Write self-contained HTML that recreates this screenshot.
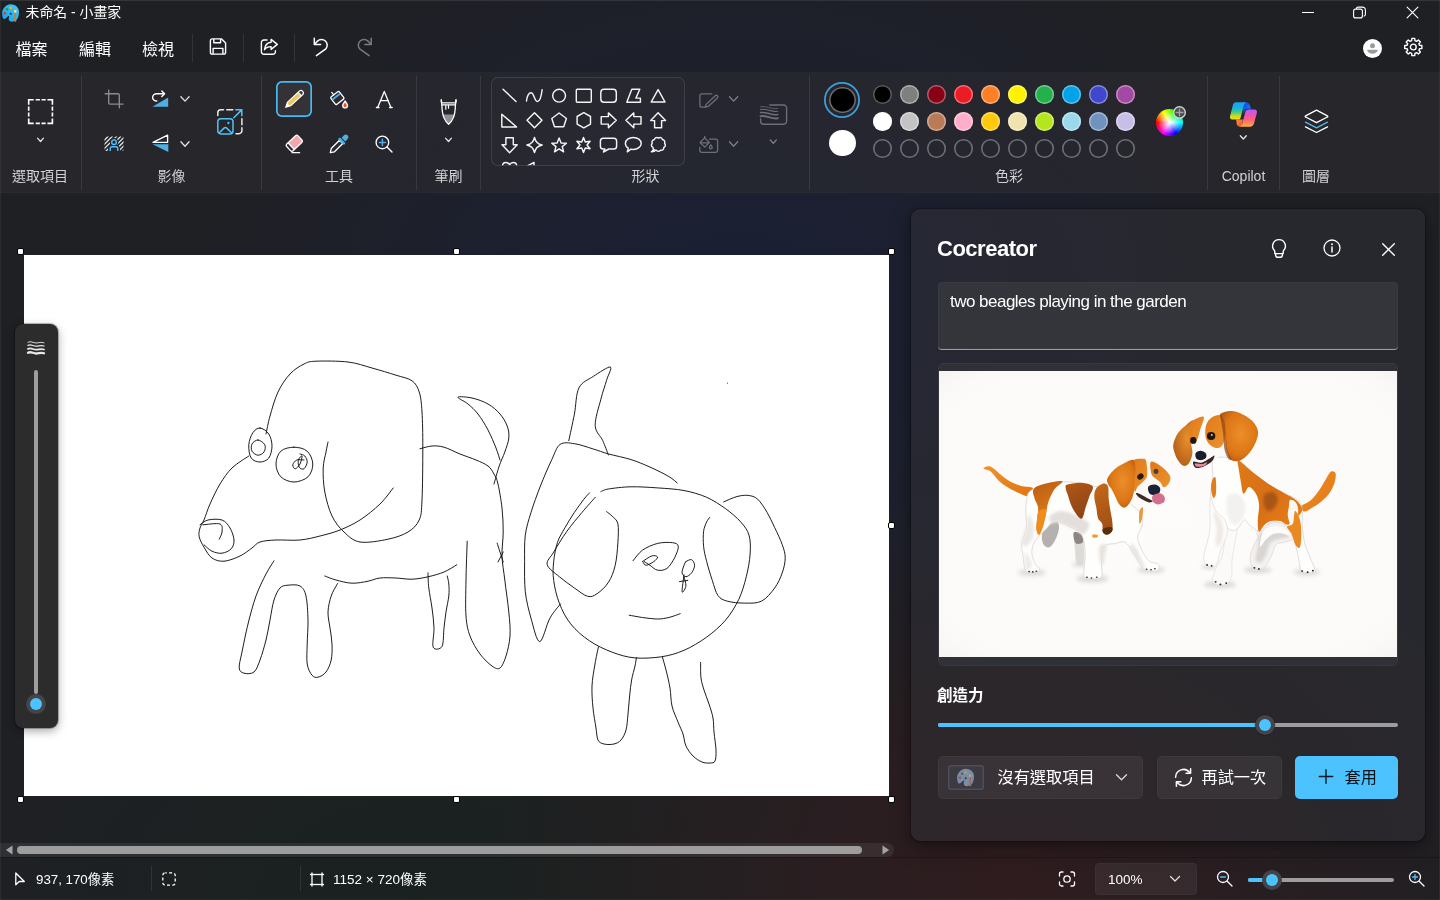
<!DOCTYPE html>
<html lang="zh-Hant">
<head>
<meta charset="utf-8">
<title>未命名 - 小畫家</title>
<style>
*{box-sizing:border-box;margin:0;padding:0}
html,body{width:1440px;height:900px;overflow:hidden;background:#1f2024}
body{font-family:"Liberation Sans","Noto Sans CJK TC",sans-serif;color:#fff;-webkit-font-smoothing:antialiased}
#app{position:relative;will-change:transform;width:1440px;height:900px;overflow:hidden;
 background:
  radial-gradient(ellipse 560px 420px at 740px 300px, rgba(26,31,54,.98), rgba(26,31,54,0) 100%),
  radial-gradient(ellipse 520px 400px at 1010px 890px, rgba(48,28,30,.95), rgba(48,28,30,0) 100%),
  radial-gradient(ellipse 480px 300px at 420px 900px, rgba(24,33,30,.8), rgba(24,33,30,0) 100%),
  #1f2024;}
.abs{position:absolute}
svg{position:absolute;overflow:visible}
.t{position:absolute;white-space:nowrap;line-height:1}
.ribbon{position:absolute;left:0;top:72px;width:1440px;height:121px;background:rgba(43,44,48,.6);box-shadow:inset 0 -1px 0 rgba(255,255,255,.02)}
.lbl{position:absolute;top:167.500px;font-size:14px;color:#d2d2d4;white-space:nowrap;line-height:16px;transform:translateX(-50%)}
.vsep{position:absolute;width:1px;background:rgba(255,255,255,.09)}
.sw{position:absolute;width:18.600px;height:18.600px;border-radius:50%;box-shadow:inset 0 0 0 1.500px rgba(255,255,255,.36)}
.sw.e{box-shadow:inset 0 0 0 1.600px #6d6f77;background:transparent}
.hd{position:absolute;width:7px;height:7px;background:#fff;border:1.5px solid #000;border-radius:2px}
</style>
</head>
<body>
<div id="app">

<!-- TITLE BAR -->
<div class="t" style="left:25.500px;top:4px;font-size:13.900px;line-height:16px;color:#fff">未命名 - 小畫家</div>

<!-- MENU BAR -->
<div class="t" style="left:15.500px;top:40.500px;font-size:16px;line-height:18px">檔案</div>
<div class="t" style="left:79px;top:40.500px;font-size:16px;line-height:18px">編輯</div>
<div class="t" style="left:142px;top:40.500px;font-size:16px;line-height:18px">檢視</div>
<div class="vsep" style="left:192px;top:34px;height:28px"></div>
<div class="vsep" style="left:243px;top:34px;height:28px"></div>
<div class="vsep" style="left:294px;top:34px;height:28px"></div>

<!--TOP-START-->
<!-- paint app icon -->
<svg style="left:2px;top:4px" width="18" height="18" viewBox="0 0 18 18"><defs><linearGradient id="pal" x1="0" y1="1" x2="1" y2="0"><stop offset="0" stop-color="#169ff0"/><stop offset="1" stop-color="#3ccbfb"/></linearGradient></defs><path d="M.1 9.300C.1 6.800 1 5 2.200 3.800 3.800 1.600 6 .2 8.600 .2c2.200 0 4.100.7 5.500 1.900 1.800 1.400 2.900 3.300 2.900 5.600 0 1.800-.2 3.500-.7 5-.6 1.700-1.500 3.100-2.700 3.900-1.100.8-2.500 1.100-3.900 1.100-1.300 0-2.300-.7-2.800-1.700-.5-1.100 0-2.100.3-3.300.2-.7-.7-.9-1.400-.3l-2.800 2.500c-.8.500-1.700.1-2.200-1.100C.3 12.500.1 10.900.1 9.300z" fill="url(#pal)"/><circle cx="2.900" cy="9.200" r="1.250" fill="#f2350e"/><circle cx="5.100" cy="5.200" r="1.250" fill="#2f9e16"/><circle cx="8.800" cy="3.800" r="1.350" fill="#fdb500"/><circle cx="8.700" cy="9.750" r="1" fill="#22353c"/><path d="M11.800 6h2.900l-.6 2.900h-1.700z" fill="#ffd59a"/><path d="M12.400 8.800h1.700l.1 9h-1.900z" fill="#e07a08"/></svg>
<!-- window controls -->
<svg style="left:1301px;top:11px" width="14" height="3" viewBox="0 0 14 3"><path d="M1 1.500h12" stroke="#fff" stroke-width="1"/></svg>
<svg style="left:1353px;top:6px" width="13" height="12" viewBox="0 -0.5 13 12" fill="none" stroke="#fff" stroke-width="1.100"><rect x=".6" y="2.600" width="8.800" height="8.800" rx="2"/><path d="M3.200 2.400c.2-1 1-1.800 2.100-1.800h4.200a2.900 2.900 0 0 1 2.900 2.900v4.200c0 1-.7 1.800-1.700 2"/></svg>
<svg style="left:1406px;top:6px" width="12" height="12" viewBox="-0.5 -0.5 12 12" fill="none" stroke="#fff" stroke-width="1.100" stroke-linecap="round"><path d="M.6.600l10.800 10.800M11.400.6L.6 11.400"/></svg>
<!-- save -->
<svg style="left:209px;top:38px" width="17" height="17" viewBox="-0.5 0 17 17" fill="none" stroke="#fff" stroke-width="1.400" stroke-linejoin="round"><path d="M2.800.9h9.300l4 4v9.300a1.900 1.900 0 0 1-1.900 1.900H2.800A1.900 1.900 0 0 1 .9 14.200V2.800A1.900 1.900 0 0 1 2.800.9z"/><path d="M4.300 1v3.800h6.800V1"/><path d="M3.600 16v-5.600h9.800V16"/></svg>
<!-- share -->
<svg style="left:260px;top:38px" width="18" height="17" viewBox="-0.5 -0.5 18 17" fill="none" stroke="#fff" stroke-width="1.400" stroke-linejoin="round" stroke-linecap="round"><path d="M6.500 1.500H3.400A2.500 2.500 0 0 0 .9 4v9.200a2.500 2.500 0 0 0 2.500 2.500h9a2.500 2.500 0 0 0 2.500-2.500v-.9"/><path d="M10.600.9l6.200 5-6.200 5V8.100c-3 0-5 .8-6.600 3.100.4-4 2.600-7 6.600-7.400z"/></svg>
<!-- undo -->
<svg style="left:312px;top:37px" width="17" height="20" viewBox="0 0 17 20" fill="none" stroke="#fff" stroke-width="1.500" stroke-linejoin="round" stroke-linecap="round"><path d="M2.300 1.200v6.300h6.300"/><path d="M2.600 7.300l2.900-3.200a5.700 5.700 0 0 1 8.300 7.800L4.400 18.600"/></svg>
<!-- redo -->
<svg style="left:356px;top:37px" width="17" height="20" viewBox="-0.5 0 17 20" fill="none" stroke="#7a7b80" stroke-width="1.500" stroke-linejoin="round" stroke-linecap="round"><path d="M14.700 1.200v6.300H8.400"/><path d="M14.400 7.300l-2.900-3.200a5.700 5.700 0 0 0-8.300 7.800l9.400 6.700"/></svg>
<!-- avatar -->
<div class="abs" style="left:1363px;top:38.500px;width:19px;height:19px;border-radius:50%;background:#fff"></div>
<svg style="left:1363px;top:38px" width="19" height="19" viewBox="0 -0.5 19 19"><circle cx="9.500" cy="7.300" r="2.500" fill="#9b9b9b"/><path d="M5 11.200h9c.5 0 .8.400.7.900-.4 1.900-2.500 3.200-5.200 3.200s-4.800-1.300-5.200-3.200c-.1-.5.200-.9.700-.9z" fill="#9b9b9b"/></svg>
<!-- gear -->
<svg style="left:1403px;top:37px" width="20" height="20" viewBox="-0.3 0 20 20" fill="none" stroke="#fff" stroke-width="1.400" stroke-linejoin="round"><path d="M8.37 3.71L8.56 1.42L11.44 1.42L11.63 3.71L13.3 4.4L15.05 2.92L17.08 4.95L15.6 6.7L16.29 8.37L18.58 8.56L18.58 11.44L16.29 11.63L15.6 13.3L17.08 15.05L15.05 17.08L13.3 15.6L11.63 16.29L11.44 18.58L8.56 18.58L8.37 16.29L6.7 15.6L4.95 17.08L2.92 15.05L4.4 13.3L3.71 11.63L1.42 11.44L1.42 8.56L3.71 8.37L4.4 6.7L2.92 4.95L4.95 2.92L6.7 4.4z"/><circle cx="10" cy="10" r="2.900"/></svg>
<!--TOP-END-->
<!-- RIBBON -->
<div class="ribbon"></div>
<div class="vsep" style="left:81px;top:76px;height:114px"></div>
<div class="vsep" style="left:261px;top:76px;height:114px"></div>
<div class="vsep" style="left:416px;top:76px;height:114px"></div>
<div class="vsep" style="left:480px;top:76px;height:114px"></div>
<div class="vsep" style="left:809px;top:76px;height:114px"></div>
<div class="vsep" style="left:1207px;top:76px;height:114px"></div>
<div class="vsep" style="left:1279px;top:76px;height:114px"></div>
<div class="lbl" style="left:40px">選取項目</div>
<div class="lbl" style="left:171.5px">影像</div>
<div class="lbl" style="left:339px">工具</div>
<div class="lbl" style="left:448.5px">筆刷</div>
<div class="lbl" style="left:645.5px">形狀</div>
<div class="lbl" style="left:1009px">色彩</div>
<div class="lbl" style="left:1243.5px">Copilot</div>
<div class="lbl" style="left:1316px">圖層</div>
<!--RI-START-->
<svg style="left:27px;top:98px" width="27" height="27" viewBox="0 0 27 27" fill="none" stroke="#fff" stroke-width="1.650"><path d="M1.700 6.700V1.700h5M8.700 1.700h4.200M14.500 1.700h4.200M20.400 1.700h5v5M25.400 8.600v4.200M25.400 14.400v4.200M25.400 20.400v5h-5M18.700 25.400h-4.200M12.900 25.400H8.700M6.700 25.400h-5v-5M1.700 18.600v-4.200M1.700 12.800V8.600"/></svg>
<svg style="left:36px;top:137px" width="8" height="5.3" viewBox="-0.5 -0.15 8 5.3" fill="none" stroke="#e4e4e6" stroke-width="1.3" stroke-linecap="round" stroke-linejoin="round"><path d="M1 1l3 3.3 3 -3.3"/></svg>
<svg style="left:104px;top:89px" width="20" height="20" viewBox="0 0 20 20" fill="none" stroke="#8b8c91" stroke-width="1.35" stroke-linecap="round" stroke-linejoin="round"><path d="M4.700 1.200v12.600a1.300 1.300 0 0 0 1.300 1.300h13"/><path d="M1.200 4.700h12.800a1.300 1.300 0 0 1 1.300 1.300v12.800"/></svg>
<svg style="left:151px;top:90px" width="19" height="18" viewBox="0 0 19 18"><path d="M1.400 16.700h15.800V7.600z" fill="#4cb0e4"/><path d="M5.800 11c-2.300 0-4.200-1.600-4.200-3.600s1.900-3.600 4.200-3.600h7.400" fill="none" stroke="#fff" stroke-width="1.4" stroke-linecap="round"/><path d="M10.800 1.100l2.800 2.700-2.800 2.700" fill="none" stroke="#fff" stroke-width="1.4" stroke-linecap="round" stroke-linejoin="round"/></svg>
<svg style="left:179px;top:95px" width="10.2" height="6.4" viewBox="-0.9 -0.7 10.2 6.4" fill="none" stroke="#e4e4e6" stroke-width="1.3" stroke-linecap="round" stroke-linejoin="round"><path d="M1 1l4.1 4.4 4.1 -4.4"/></svg>
<svg style="left:104px;top:136px" width="19" height="15" viewBox="-0.5 -0.5 19 15"><defs><clipPath id="rbc"><rect x="0" y="0" width="19" height="14.500" rx="1"/></clipPath></defs><g clip-path="url(#rbc)" stroke="#e8e8e8" stroke-width="1.25"><path d="M-3 6.500l7-7M-3 10.700l11.200-11.200M-3 14.900l15.400-15.400M-1 17.100l17.600-17.600M3.200 17.100l17.600-17.600M7.400 17.100l14-14M11.600 17.100l10-10M15.800 17.100l6-6"/></g><circle cx="9.500" cy="5.700" r="4.300" fill="#27282d"/><path d="M3.500 15V12a3.600 3.600 0 0 1 3.600-3.600h4.800a3.600 3.600 0 0 1 3.600 3.600V15z" fill="#27282d"/><circle cx="9.500" cy="5.700" r="2.300" fill="none" stroke="#4cc2ff" stroke-width="1.4"/><path d="M5.700 14.500v-2.300a1.900 1.900 0 0 1 1.900-1.900h3.800a1.900 1.900 0 0 1 1.900 1.900v2.300" fill="none" stroke="#4cc2ff" stroke-width="1.4"/></svg>
<svg style="left:151px;top:134px" width="18" height="19" viewBox="-0.5 0 18 19"><path d="M1.500 8.400L16.100 1.200v7.200z" fill="none" stroke="#fff" stroke-width="1.35" stroke-linejoin="round"/><path d="M1 10.300h15.800v7.600z" fill="#4cb0e4"/></svg>
<svg style="left:179px;top:140px" width="10.2" height="6.4" viewBox="-0.9 -0.8 10.2 6.4" fill="none" stroke="#e4e4e6" stroke-width="1.3" stroke-linecap="round" stroke-linejoin="round"><path d="M1 1l4.1 4.4 4.1 -4.4"/></svg>
<svg style="left:216px;top:108px" width="28" height="28" viewBox="0 0 28 28" fill="none" stroke-width="1.5" stroke-linecap="round" stroke-linejoin="round"><path d="M1.800 7.500V4.800a3 3 0 0 1 3-3h2.700M10.800 1.800h6" stroke="#e9e9ea"/><path d="M25.900 10.800v6M25.900 19.800v2.900a3 3 0 0 1-3 3h-2.900" stroke="#e9e9ea"/><path d="M17.800 9.800L25.700 1.900M19.800 1.800h6v6" stroke="#4fc3f7"/><rect x="1.800" y="10.700" width="15.200" height="15.200" rx="3" stroke="#4fc3f7"/><circle cx="12.400" cy="15" r="1.150" fill="#4fc3f7" stroke="none"/><path d="M3.300 24.800l4.700-4.700a1.900 1.900 0 0 1 2.700 0l4.800 4.700" stroke="#4fc3f7"/></svg>
<div class="abs" style="left:276px;top:80.700px;width:36px;height:36.300px;border-radius:6px;background:#343236;box-shadow:inset 0 0 0 1.700px #45baf6"></div>
<svg style="left:282px;top:87px" width="24" height="24" viewBox="0 0 24 24"><g transform="translate(12.100 12.300) rotate(-43)"><path d="M-12.600 0l5.600-3h16.300a3 3 0 0 1 0 6H-7z" fill="#fff"/><path d="M-6.800-1.900H7.300v3.800H-6.800l-1.200-1.900z" fill="#ecc763"/><path d="M8.400-1.900h.9a1.900 1.900 0 0 1 0 3.800h-.9z" fill="#3a393d"/><path d="M-11.300 0l2.400-1.250v2.500z" fill="#3a393d" opacity=".0"/></g></svg>
<svg style="left:328px;top:88px" width="22" height="22" viewBox="0 0 22 22"><g transform="translate(9.200 9.800) rotate(-38)"><rect x="-5.400" y="-4.400" width="10.800" height="9.300" rx="1.300" fill="#2a2b30" stroke="#fff" stroke-width="1.300"/><path d="M-4.700-1.500h9.400" stroke="#49a9e0" stroke-width="2"/><path d="M-4.700 .4h9.400" stroke="#fff" stroke-width=".7" opacity=".0"/><path d="M-1-4.400v-3.200" stroke="#fff" stroke-width="1.200" stroke-linecap="round"/></g><path d="M17.100 11.900c2 2.500 3.100 4.100 3.100 5.500a3.100 3.100 0 0 1-6.200 0c0-1.400 1.100-3 3.100-5.500z" fill="#fff"/><path d="M17.100 14.400c1.100 1.400 1.700 2.300 1.700 3.100a1.700 1.700 0 0 1-3.400 0c0-.8.600-1.700 1.700-3.100z" fill="#f4511e"/></svg>
<svg style="left:375px;top:90px" width="19" height="19" viewBox="0 0 19 19" fill="none" stroke="#fff" stroke-width="1.300" stroke-linecap="round" stroke-linejoin="round"><path d="M2.700 17.400L9.300 1.400l6.600 16"/><path d="M5.400 10.700h7.800"/><path d="M1.400 17.500h2.600M14.600 17.500h2.600"/></svg>
<svg style="left:283px;top:133px" width="22" height="22" viewBox="0 0 22 22"><g transform="translate(11 10.500) rotate(-43)"><rect x="-7.400" y="-4.600" width="15.600" height="9.200" rx="1.800" fill="#f4a6ad"/><path d="M-7.400-2.800a1.800 1.800 0 0 1 1.800-1.800h1.700v9.200h-1.700a1.800 1.800 0 0 1-1.800-1.800z" fill="#2a2b30"/><rect x="-7.400" y="-4.600" width="15.600" height="9.200" rx="1.800" fill="none" stroke="#fff" stroke-width="1.300"/><path d="M-3.900-4.600v9.200" stroke="#fff" stroke-width="1.300"/></g><path d="M9 19.700h7.600" stroke="#fff" stroke-width="1.300" stroke-linecap="round"/></svg>
<svg style="left:328px;top:133px" width="22" height="22" viewBox="0 0 22 22"><g transform="translate(11 11) rotate(-45)"><path d="M-12.300 0l3.600-2.300H3v4.600H-8.700z" fill="#2a2b30" stroke="#fff" stroke-width="1.300" stroke-linejoin="round"/><rect x="2.600" y="-4.300" width="2.700" height="8.600" rx="1.200" fill="#4cb0e4"/><path d="M6.300-2.600h3.300a2.600 2.600 0 0 1 0 5.200H6.300z" fill="#4cb0e4"/></g></svg>
<svg style="left:374px;top:134px" width="20" height="20" viewBox="0 0 20 20" fill="none" stroke-linecap="round"><circle cx="8.400" cy="8.400" r="6.300" stroke="#fff" stroke-width="1.350"/><path d="M13 13l5 5" stroke="#fff" stroke-width="1.350"/><path d="M5.300 8.400h6.200M8.400 5.300v6.200" stroke="#4cb0e4" stroke-width="1.500"/></svg>
<svg style="left:440px;top:98px" width="18" height="26.6" viewBox="0 -0.947 18 28" preserveAspectRatio="none" fill="none" stroke="#fff" stroke-width="1.300" stroke-linejoin="round" stroke-linecap="round"><path d="M3 16.300H14.300C13.900 18 13.500 19.400 13.100 20.300 12 23 10.500 25 8.650 26.500 6.800 25 5.300 23 4.200 20.300 3.800 19.400 3.400 18 3 16.300z" fill="#8f9094" stroke="none"/><path d="M1.300 1c0 1.800.2 2.600.5 3.300H15.500c.3-.7.500-1.500.500-3.300"/><path d="M1.900 6.300H15.400"/><path d="M1.300 1C1.300 4 1.800 5 1.900 7 2 12 2.400 16 4 20 5.200 23 6.800 25 8.650 26.700 10.500 25 12.100 23 13.300 20 14.900 16 15.300 12 15.400 7 15.500 5 16 4 16 1"/><path d="M5.800 6.700v4.300M8.500 6.700v3.100" stroke-width="1.200"/></svg>
<svg style="left:444px;top:137px" width="8" height="5.3" viewBox="-0.5 -0.15 8 5.3" fill="none" stroke="#e4e4e6" stroke-width="1.3" stroke-linecap="round" stroke-linejoin="round"><path d="M1 1l3 3.3 3 -3.3"/></svg>
<div class="abs" style="left:490.500px;top:77px;width:194px;height:89px;border-radius:7px;border:1px solid rgba(255,255,255,.11);background:rgba(255,255,255,.012)"></div>
<svg style="left:0;top:0" width="1440" height="200" viewBox="0 0 1440 200" fill="none" stroke="#f4f4f5" stroke-width="1.450" stroke-linejoin="round" stroke-linecap="round"><defs><clipPath id="shc"><rect x="491" y="78" width="193" height="87.200"/></clipPath></defs><g clip-path="url(#shc)"><path d="M503 89.200L516 101.500"/><path d="M526.500 101c.6-4.800 2.400-8.200 4.600-8.200 3 0 3.400 8.700 6.400 8.700 2.300 0 3.900-5.500 4.600-11.800"/><circle cx="559.100" cy="95.700" r="6.400"/><rect x="576.300" y="89.300" width="15" height="13" rx="1"/><rect x="600.800" y="89.300" width="15.500" height="13" rx="3.200"/><path d="M631.8 89.3 L639.8 89.3 L635.9 98.1 L640.4 98.1 L640.4 102.2 L626.8 102.2z"/><path d="M658.1 89.6 L665 102 L651.2 102z"/><path d="M501.8 114.2 L501.8 127 L516.6 127z"/><path d="M534.5 112.8 L542 120.3 L534.5 127.8 L527 120.3z"/><path d="M559.1 113 L566.4 118.5 L563.7 126.7 L554.5 126.7 L551.8 118.5z"/><path d="M583.8 112.7 L590.5 116.5 L590.5 124.1 L583.8 127.9 L577.1 124.1 L577.1 116.5z"/><path d="M601.2 116.6 L608.4 116.6 L608.4 112.9 L616.3 120.3 L608.4 127.7 L608.4 124.1 L601.2 124.1z"/><path d="M641 116.6 L633.8 116.6 L633.8 112.9 L625.9 120.3 L633.8 127.7 L633.8 124.1 L641 124.1z"/><path d="M654.6 127.7 L654.6 120.6 L650.7 120.6 L658.1 112.7 L665.5 120.6 L661.6 120.6 L661.6 127.7z"/><path d="M505.9 137.7 L513.3 137.7 L513.3 144.8 L517.2 144.8 L509.6 152.7 L502 144.8 L505.9 144.8z"/><path d="M534.5 137.4Q535.8 143.7 542.1 145Q535.8 146.3 534.5 152.6Q533.2 146.3 526.9 145Q533.2 143.7 534.5 137.4z"/><path d="M559.1 137.9 L561.04 142.93 L566.42 143.22 L562.24 146.62 L563.63 151.83 L559.1 148.9 L554.57 151.83 L555.96 146.62 L551.78 143.22 L557.16 142.93z"/><path d="M583.5 137.4 L585.25 141.97 L590.08 141.2 L587 145 L590.08 148.8 L585.25 148.03 L583.5 152.6 L581.75 148.03 L576.92 148.8 L580 145 L576.92 141.2 L581.75 141.97z"/><path d="M603.200 138.200h10.600a2.800 2.800 0 0 1 2.800 2.800v5.200a2.800 2.800 0 0 1-2.800 2.800h-5l-5.400 3 1.500-3h-1.700a2.800 2.800 0 0 1-2.800-2.800V141a2.800 2.800 0 0 1 2.800-2.800z"/><path d="M633.300 137.400c4.400 0 7.900 2.700 7.900 6s-3.500 6-7.900 6c-.8 0-1.600-.1-2.300-.3l-3.700 2.700 1-3.700c-1.800-1.100-2.900-2.800-2.900-4.700 0-3.300 3.500-6 7.900-6z"/><path d="M658.4 138Q661.2 136.59 662.45 139.47Q665.5 140.2 664.6 143.21Q666.48 145.72 663.86 147.45Q663.67 150.58 660.55 150.22Q658.4 152.5 656.25 150.22Q653.13 150.58 652.94 147.45Q650.32 145.72 652.2 143.21Q651.3 140.2 654.35 139.47Q655.6 136.59 658.4 138z"/><path d="M653.800 149.600l-2.400 2.200 3.300-.6"/><path d="M502.500 166c0-2 1.500-3.600 3.500-3.600 1.500 0 2.800.9 3.600 2.200.8-1.300 2.100-2.200 3.600-2.200 2 0 3.500 1.600 3.500 3.600"/><path d="M527.500 166l6.500-3.600v3.600"/></g></svg>
<svg style="left:699px;top:93px" width="20" height="16" viewBox="0 0 20 16" fill="none" stroke="#6c6f77" stroke-width="1.300" stroke-linecap="round" stroke-linejoin="round"><path d="M12.800 .9H2.800A1.900 1.900 0 0 0 .9 2.800v9.400a1.900 1.900 0 0 0 1.900 1.900h3.600"/><path d="M6.200 14.200l1-2.800 9-8.600a1.550 1.550 0 0 1 2.200 2.200l-9.200 8.400z"/></svg>
<svg style="left:728px;top:95px" width="10.2" height="6.4" viewBox="-0.5 -0.7 10.2 6.4" fill="none" stroke="#7e8188" stroke-width="1.3" stroke-linecap="round" stroke-linejoin="round"><path d="M1 1l4.1 4.4 4.1 -4.4"/></svg>
<svg style="left:699px;top:135px" width="20" height="18" viewBox="0 -0.5 20 18" fill="none" stroke="#6c6f77" stroke-width="1.300" stroke-linecap="round" stroke-linejoin="round"><path d="M10.500 3.600h6.300a1.800 1.800 0 0 1 1.800 1.800v9.700a1.800 1.800 0 0 1-1.800 1.800H2.600A1.800 1.800 0 0 1 .8 15.100v-3.300"/><path d="M5.700 2.400l4.600 4.600-4.600 4.600L1.100 7z"/><path d="M5.700 2.600V.8M2 7.300h7.400"/><path d="M11.800 9.400c.9 1.200 1.400 2 1.400 2.600a1.400 1.400 0 0 1-2.800 0c0-.6.500-1.400 1.400-2.600z"/></svg>
<svg style="left:728px;top:140px" width="10.2" height="6.4" viewBox="-0.5 -0.8 10.2 6.4" fill="none" stroke="#7e8188" stroke-width="1.3" stroke-linecap="round" stroke-linejoin="round"><path d="M1 1l4.1 4.4 4.1 -4.4"/></svg>
<svg style="left:759px;top:103px" width="29" height="22" viewBox="0 -0.5 29 22" fill="none" stroke="#6c6f77" stroke-linecap="round"><path d="M10.800 1.500h13.800a3 3 0 0 1 3 3v13.200a3 3 0 0 1-3 3H4.600a3 3 0 0 1-3-3v-2.300" stroke-width="1.350"/><path d="M1.600 3.300c5.500-1.400 10.500 2.800 17.200 1.700" stroke-width=".8"/><path d="M1.600 6c5.500-1.400 10.500 2.900 17.200 1.800" stroke-width="1.100"/><path d="M1.600 9.100c5.500-1.400 10.500 3 17.200 1.900" stroke-width="1.500"/><path d="M1.600 12.700c5.500-1.400 10.500 3.200 17.200 2.100" stroke-width="2"/></svg>
<svg style="left:769px;top:139px" width="8" height="5.3" viewBox="-0.3 -0.05 8 5.3" fill="none" stroke="#7e8188" stroke-width="1.3" stroke-linecap="round" stroke-linejoin="round"><path d="M1 1l3 3.3 3 -3.3"/></svg>
<div class="abs" style="left:824.300px;top:82px;width:36px;height:36px;border-radius:50%;box-shadow:inset 0 0 0 1.800px #3c9fd8"></div>
<div class="abs" style="left:829px;top:86.700px;width:26.600px;height:26.600px;border-radius:50%;background:#000;box-shadow:inset 0 0 0 1.600px #6b6c71"></div>
<div class="abs" style="left:829px;top:129.700px;width:26.600px;height:26.600px;border-radius:50%;background:#fff"></div>
<div class="sw" style="left:873.2px;top:85.300px;background:#000000"></div>
<div class="sw" style="left:873.2px;top:112.400px;background:#ffffff"></div>
<div class="sw e" style="left:873.2px;top:139.400px"></div>
<div class="sw" style="left:900.22px;top:85.300px;background:#7f7f7f"></div>
<div class="sw" style="left:900.22px;top:112.400px;background:#c3c3c3"></div>
<div class="sw e" style="left:900.22px;top:139.400px"></div>
<div class="sw" style="left:927.24px;top:85.300px;background:#880015"></div>
<div class="sw" style="left:927.24px;top:112.400px;background:#b97a57"></div>
<div class="sw e" style="left:927.24px;top:139.400px"></div>
<div class="sw" style="left:954.26px;top:85.300px;background:#ed1c24"></div>
<div class="sw" style="left:954.26px;top:112.400px;background:#ffaec9"></div>
<div class="sw e" style="left:954.26px;top:139.400px"></div>
<div class="sw" style="left:981.28px;top:85.300px;background:#ff7f27"></div>
<div class="sw" style="left:981.28px;top:112.400px;background:#ffc90e"></div>
<div class="sw e" style="left:981.28px;top:139.400px"></div>
<div class="sw" style="left:1008.3px;top:85.300px;background:#fff200"></div>
<div class="sw" style="left:1008.3px;top:112.400px;background:#efe4b0"></div>
<div class="sw e" style="left:1008.3px;top:139.400px"></div>
<div class="sw" style="left:1035.32px;top:85.300px;background:#22b14c"></div>
<div class="sw" style="left:1035.32px;top:112.400px;background:#b5e61d"></div>
<div class="sw e" style="left:1035.32px;top:139.400px"></div>
<div class="sw" style="left:1062.34px;top:85.300px;background:#00a2e8"></div>
<div class="sw" style="left:1062.34px;top:112.400px;background:#99d9ea"></div>
<div class="sw e" style="left:1062.34px;top:139.400px"></div>
<div class="sw" style="left:1089.36px;top:85.300px;background:#3f48cc"></div>
<div class="sw" style="left:1089.36px;top:112.400px;background:#7092be"></div>
<div class="sw e" style="left:1089.36px;top:139.400px"></div>
<div class="sw" style="left:1116.38px;top:85.300px;background:#a349a4"></div>
<div class="sw" style="left:1116.38px;top:112.400px;background:#c8bfe7"></div>
<div class="sw e" style="left:1116.38px;top:139.400px"></div>
<div class="abs" style="left:1156px;top:109px;width:27px;height:27px;border-radius:50%;background:radial-gradient(circle,#fff 0%,rgba(255,255,255,.85) 12%,rgba(255,255,255,0) 62%),conic-gradient(from 270deg,#ff0000,#ffff00 16.600%,#00ff00 33.300%,#00ffff 50%,#0000ff 66.600%,#ff00ff 83.300%,#ff0000)"></div>
<svg style="left:1172px;top:105px" width="14" height="14" viewBox="-0.5 -0.5 14 14"><circle cx="7" cy="7" r="5.800" fill="#4c4d50" stroke="#d2d2d4" stroke-width="1.400"/><path d="M7 3.600v6.800M3.600 7h6.800" stroke="#9fa0a2" stroke-width="1.300" stroke-linecap="round"/></svg>
<svg style="left:1229px;top:101px" width="29" height="27" viewBox="0 0 29 27"><defs>
<linearGradient id="cpa" x1="0" y1="0" x2="0" y2="1"><stop offset="0" stop-color="#1e9bff"/><stop offset=".3" stop-color="#12b2e6"/><stop offset=".55" stop-color="#3ec98c"/><stop offset=".8" stop-color="#c8dc1e"/><stop offset="1" stop-color="#ffdc00"/></linearGradient>
<linearGradient id="cpb" x1="0" y1="0" x2="0" y2="1"><stop offset="0" stop-color="#b45cff"/><stop offset=".3" stop-color="#ea52b8"/><stop offset=".6" stop-color="#ff6478"/><stop offset="1" stop-color="#ffae3c"/></linearGradient>
<linearGradient id="cpc" x1="0" y1="0" x2="1" y2="1"><stop offset="0" stop-color="#0d3fe0"/><stop offset="1" stop-color="#2a8cf5"/></linearGradient>
<linearGradient id="cpd" x1="0" y1="0" x2="1" y2="1"><stop offset="0" stop-color="#ff8a3a"/><stop offset="1" stop-color="#f0502e"/></linearGradient></defs>
<path d="M14.300 1.200h2.600c1.800 0 3.100.9 3.700 2.500l1.500 4.100h-3.700c-1.200 0-2.200.7-2.600 1.800l-1.500 4z" fill="url(#cpc)"/>
<path d="M7.200 18.600h6.800l-1.400 5.300c-.3 1-.8 1.700-1.500 1.900-1.800 0-2.900-1-3.400-2.700z" fill="url(#cpd)"/>
<path d="M7 1.200h9.900c-1 .8-1.700 2-2.200 3.600l-2.900 11.100c-.5 1.800-1.200 2.700-2 2.700H3.200C1.500 18.600.5 17 1 15.300L4 3.800C4.400 2.200 5.500 1.200 7 1.200z" fill="url(#cpa)"/>
<path d="M19.100 8.600h6.500c1.700 0 2.800 1.500 2.300 3.200l-2.900 10.600c-.5 1.800-2.100 3.400-3.900 3.400H11.100c1-.8 1.700-2 2.200-3.600l2.900-10.800c.4-1.600 1.500-2.800 2.900-2.800z" fill="url(#cpb)"/>
</svg>
<svg style="left:1239px;top:134px" width="8" height="5.3" viewBox="-0.3 -0.75 8 5.3" fill="none" stroke="#e4e4e6" stroke-width="1.3" stroke-linecap="round" stroke-linejoin="round"><path d="M1 1l3 3.3 3 -3.3"/></svg>
<svg style="left:1304px;top:109px" width="25" height="25" viewBox="0 0 25 25" fill="none" stroke-width="1.400" stroke-linejoin="round" stroke-linecap="round"><path d="M12.500 1.200l10.900 5.700a.6.600 0 0 1 0 1.100L12.500 13.700 1.600 8a.6.600 0 0 1 0-1.100z" stroke="#fff"/><path d="M1.500 13.200l11 5.600 11-5.600" stroke="#4cb8ea"/><path d="M1.500 17.900l11 5.600 11-5.600" stroke="#fff"/></svg>
<!--RI-END-->

<!-- WORKSPACE / CANVAS -->
<div class="abs" id="canvas" style="left:24px;top:255px;width:865px;height:541px;background:#fff"></div>
<!--SK-START-->
<svg style="left:0;top:0" width="1440" height="900" viewBox="0 0 1440 900" fill="none" stroke="#111" stroke-width="0.950" stroke-linecap="round" stroke-linejoin="round"><path d="M266 434C266.7 431 268 423 270 416C272 409 274.7 399 278 392C281.3 385 285.7 378.7 290 374C294.3 369.3 299.7 366.1 304 364C308.3 361.9 308.7 361.5 316 361.2C323.3 360.9 338.7 360.9 348 362C357.3 363.1 364 365.8 372 368C380 370.2 389.3 373.1 396 375.2C402.7 377.3 408.1 378 412 380.8C415.9 383.6 417.5 386.8 419.2 392C420.9 397.2 421.4 402.7 422 412C422.6 421.3 422.8 433.3 422.8 448C422.8 462.7 422.6 488 422 500C421.4 512 421.5 514.7 419.2 520C416.9 525.3 413.2 528.8 408 532C402.8 535.2 396 537.5 388 539.2C380 540.9 367.3 543.2 360 542C352.7 540.8 348.7 536.3 344 532C339.3 527.7 335.2 522.7 332 516C328.8 509.3 326.3 500 324.8 492C323.3 484 323 474.7 323.2 468C323.4 461.3 325.2 456.3 326 452C326.8 447.7 327.7 443.7 328 442"/><path d="M248.8 456C246 458 236.8 463.3 232 468C227.2 472.7 223.7 478 220 484C216.3 490 212.7 498 210 504C207.3 510 205.7 516 204 520C202.3 524 200.8 525.2 200 528C199.2 530.8 198.5 533.6 199.2 536.8C199.9 540 201.9 543.7 204 547.2C206.1 550.7 208.7 555.7 212 558C215.3 560.3 219.3 561.5 224 561.2C228.7 560.9 235.3 558.2 240 556C244.7 553.8 248.7 550.3 252 548C255.3 545.7 256 543.3 260 542C264 540.7 269.3 540.3 276 540C282.7 539.7 292.7 540.7 300 540C307.3 539.3 313.3 537.7 320 536C326.7 534.3 333.3 532.7 340 530C346.7 527.3 353.3 524.3 360 520C366.7 515.7 374.5 509.3 380 504C385.5 498.7 391 490.7 393.2 488"/><path d="M200 524.8C201.3 524 204.3 520.8 208 520C211.7 519.2 218.3 518.7 222 520C225.7 521.3 228 524.7 230 528C232 531.3 233.8 536.5 234 540C234.2 543.5 233.2 546.6 231.2 548.8C229.2 551 225.2 552.8 222 553.2C218.8 553.6 215 552.6 212 551.2C209 549.8 205.3 545.9 204 544.8"/><path d="M202.8 524.8C205.7 524.7 216.8 522.8 220 524C223.2 525.2 222.1 529.5 222 532C221.9 534.5 219.7 538 219.2 539.2"/><path d="M260 428C262.7 428.2 266.8 431 268.8 434C270.8 437 272 442 272 446C272 450 270.8 455.3 268.8 458C266.8 460.7 262.9 462 260 462C257.1 462 253.1 460.9 251.2 458C249.3 455.1 248.5 449 248.8 444.8C249.1 440.6 250.9 435.6 252.8 432.8C254.7 430 257.3 427.8 260 428z"/><path d="M258 440C260.1 440.1 263.8 442.8 264.8 444.8C265.8 446.8 265.1 450.3 264 452C262.9 453.7 260 455.3 258 455.2C256 455.1 253 453.1 252 451.2C251 449.3 251 445.9 252 444C253 442.1 255.9 439.9 258 440z"/><path d="M294 447.2C298.4 447.2 304.1 448.4 307.2 451.2C310.3 454 312.7 459.7 312.8 464C312.9 468.3 311.1 473.8 308 476.8C304.9 479.8 298.5 482 294 482C289.5 482 283.8 479.8 280.8 476.8C277.8 473.8 276 468.3 276 464C276 459.7 277.8 454 280.8 451.2C283.8 448.4 289.6 447.2 294 447.2z"/><path d="M300 454C300.8 454.3 303.6 454.7 304.8 456C306 457.3 307.3 459.9 307.2 462C307.1 464.1 305.3 467.9 304 468.8C302.7 469.7 300.1 468.7 299.2 467.2C298.3 465.7 297.9 461.9 298.4 460C298.9 458.1 301.7 455.3 302 456C302.3 456.7 301.1 461.9 300 464C298.9 466.1 296.4 468.7 295.2 468.8C294 468.9 292.5 466.3 292.8 464.8C293.1 463.3 294.9 460.8 296.8 460C298.7 459.2 302.8 460 304 460"/><path d="M420 448.8C422 448.3 428 446.3 432 446C436 445.7 439.3 445.9 444 447.2C448.7 448.5 454.7 451.9 460 454C465.3 456.1 471.3 458 476 460C480.7 462 485 463.7 488 466C491 468.3 492.3 471 494 474C495.7 477 496.7 478.3 498 484C499.3 489.7 501.1 500 502 508C502.9 516 503.2 524 503.2 532C503.2 540 501.7 548 502 556C502.3 564 503.7 570.7 504.8 580C505.9 589.3 507.9 602.7 508.8 612C509.7 621.3 510.5 628.7 510 636C509.5 643.3 507.7 650.7 506 656C504.3 661.3 502.3 666.3 500 668C497.7 669.7 495.3 668.3 492 666C488.7 663.7 483.7 659 480 654C476.3 649 472.3 642.3 470 636C467.7 629.7 466.7 625.3 466 616C465.3 606.7 465.8 592.5 466 580C466.2 567.5 467 547.7 467.2 541.2"/><path d="M500 460C499.3 458 498 453 496 448C494 443 491 435.7 488 430C485 424.3 481.3 418.3 478 414C474.7 409.7 471.3 406.8 468 404C464.7 401.2 457.3 398.2 458 397.2C458.7 396.2 467 396.9 472 398C477 399.1 483.3 401.3 488 404C492.7 406.7 496.8 410.3 500 414C503.2 417.7 505.7 422 507.2 426C508.7 430 509.2 433.7 508.8 438C508.4 442.3 506.4 447.3 504.8 452C503.2 456.7 501 460.7 499.2 466C497.4 471.3 494.9 481 494 484"/><path d="M497.2 543.2C497.7 544.7 499 548.9 500 552C501 555.1 502.7 560.3 503.2 562"/><path d="M503.2 552 L498 562"/><path d="M324.8 576C326.7 576.7 331.5 578.8 336 580C340.5 581.2 346.7 583 352 583.2C357.3 583.4 363.3 582.1 368 581.2C372.7 580.3 375.3 578.5 380 578C384.7 577.5 390.7 577.8 396 578C401.3 578.2 406.7 579.4 412 579.2C417.3 579 422.7 578 428 576.8C433.3 575.6 439.2 574 444 572C448.8 570 454.7 566 456.8 564.8"/><path d="M274 560.8C272.7 563 269 568.1 266 574C263 579.9 259 587.7 256 596C253 604.3 250.3 614.7 248 624C245.7 633.3 243.5 644.7 242 652C240.5 659.3 238.9 664.5 239.2 668C239.5 671.5 241.5 672.5 244 673.2C246.5 673.9 251.3 674.2 254 672C256.7 669.8 258 665.3 260 660C262 654.7 264.3 646.7 266 640C267.7 633.3 268.7 626.7 270 620C271.3 613.3 272.3 605.3 274 600C275.7 594.7 277.7 590.5 280 588C282.3 585.5 284.7 585.5 288 585.2C291.3 584.9 297 584.2 300 586C303 587.8 304.7 590.3 306 596C307.3 601.7 307.8 612 308 620C308.2 628 307.3 636.7 307.2 644C307.1 651.3 306.4 658.8 307.2 664C308 669.2 310.2 673 312 675.2C313.8 677.4 315.7 677.7 318 677.2C320.3 676.7 323.8 674.9 326 672C328.2 669.1 330.2 664.7 331.2 660C332.2 655.3 332.2 649.3 332 644C331.8 638.7 330.7 633.3 330 628C329.3 622.7 327.8 617.3 328 612C328.2 606.7 329.7 600.5 331.2 596C332.7 591.5 335.7 586.9 336.8 584.8C337.9 582.7 337.8 583.5 338 583.2"/><path d="M428 572.8C428.1 575.3 428.1 582.1 428.8 588C429.5 593.9 431.1 601.3 432 608C432.9 614.7 433.8 621.5 434 628C434.2 634.5 431.9 644.1 433.2 647.2C434.5 650.3 440.2 649.6 442 646.4C443.8 643.2 443.3 633.7 444 628C444.7 622.3 445.2 617.3 446 612C446.8 606.7 448.3 600.7 448.8 596C449.3 591.3 449.1 587.3 448.8 584C448.5 580.7 447.5 577.3 447.2 576"/><path d="M568.8 440.7C569.7 436.3 572.7 423 574.4 414.2C576.1 405.4 575.8 394.1 579 387.8C582.1 381.5 588.1 379.9 593.3 376.4C598.6 373 608.1 366.4 610.3 367C612.5 367.6 608.1 374.9 606.6 380.2C605 385.6 602.8 391.6 600.9 399.1C599 406.7 594.9 418.6 595.2 425.6C595.5 432.5 600.6 435.8 602.8 440.7C605 445.6 607.5 452.6 608.4 455"/><path d="M677.2 483C675.8 481.9 673.4 479.2 668.9 476.6C664.4 473.9 656.3 469.9 650 467.1C643.7 464.3 638 461.8 631.1 459.6C624.2 457.4 614.7 455.7 608.4 453.9C602.1 452.1 599 450.7 593.3 449C587.7 447.3 580 444.4 574.4 443.7C568.9 442.9 563.9 441.8 560.1 444.4C556.3 447.1 555.1 452.6 551.8 459.6C548.5 466.5 543.9 477.2 540.4 486C537 494.8 533.5 504.3 531 512.4C528.5 520.6 526.4 526.9 525.3 535.1C524.3 543.3 524.6 552.1 524.6 561.6C524.6 571 524.3 582.3 525.3 591.8C526.4 601.2 528.6 609.9 531 618.2C533.4 626.5 536.5 641.6 539.7 641.6C542.8 641.6 546.4 624.5 549.9 618.2C553.4 611.9 558.7 606.3 560.5 603.9"/><path d="M600.9 491.7C602.1 491.2 603.4 489.8 608.4 489C613.5 488.2 622.9 486.9 631.1 486.8C639.3 486.6 648.7 487.3 657.6 487.9C666.4 488.5 675.8 489 684 490.5C692.2 492.1 699.7 494.3 706.7 497.3C713.6 500.4 719.9 504.6 725.6 508.7C731.2 512.8 736.8 517.5 740.7 521.9C744.6 526.3 747.4 529.8 749 535.1C750.6 540.5 750.6 547.1 750.1 554C749.7 560.9 748.2 569.1 746.3 576.7C744.4 584.2 742.2 592.1 738.8 599.3C735.3 606.6 730.9 613.8 725.6 620.1C720.2 626.4 713.6 632.1 706.7 637.1C699.7 642.1 691.6 647.1 684 650.3C676.4 653.6 669.5 655.5 661.3 656.8C653.1 658 643.1 658.6 634.9 657.9C626.7 657.1 619.8 655.1 612.2 652.2C604.7 649.4 596.5 645.6 589.6 640.9C582.6 636.2 575.7 630.2 570.7 623.9C565.6 617.6 562.2 610.4 559.3 603.1C556.5 595.9 554.6 587.4 553.7 580.4C552.7 573.5 553 567.9 553.7 561.6C554.3 555.3 555.6 548.3 557.4 542.7C559.3 537 562.2 532.6 565 527.6C567.8 522.5 571.3 517.2 574.4 512.4C577.6 507.7 581.4 502.5 583.9 499.2C586.4 495.9 588.6 493.9 589.6 492.8"/><path d="M595.2 497.3C593 499.9 586.7 506.8 582 512.4C577.3 518.1 571.6 524.7 566.9 531.3C562.2 537.9 556.9 546.6 553.7 552.1C550.4 557.7 546.3 560.5 547.2 564.6C548.2 568.7 554.8 572.8 559.3 576.7C563.9 580.6 569.7 584.7 574.4 588C579.2 591.3 583.9 595.4 587.7 596.3C591.4 597.3 593.6 596 597.1 593.7C600.6 591.3 605.4 587.1 608.4 582.3C611.5 577.6 613.7 571.9 615.2 565.3C616.8 558.7 617.4 549.6 617.9 542.7C618.3 535.7 618.8 528.2 617.9 523.8C616.9 519.4 614.1 518.2 612.2 516.2C610.3 514.2 607.5 512.4 606.6 511.7"/><path d="M723.7 501.9C725.9 501 732.8 497.6 736.9 496.6C741 495.5 744.8 495 748.2 495.4C751.7 495.9 754.5 496.4 757.7 499.2C760.8 502.1 764.3 507.7 767.1 512.4C769.9 517.2 772.1 522.2 774.7 527.6C777.2 532.9 780.5 539.5 782.2 544.6C784 549.6 785.2 553.1 785.2 557.8C785.2 562.5 784 567.9 782.2 572.9C780.5 577.9 778.1 583.3 774.7 588C771.2 592.7 766.5 598.7 761.4 601.2C756.4 603.7 750.1 603.1 744.4 603.1C738.8 603.1 731.9 602.5 727.4 601.2C723 600 720.5 599 718 595.6C715.5 592.1 714.2 586.1 712.3 580.4C710.4 574.8 708.1 567.2 706.7 561.6C705.2 555.9 704.1 551.5 703.6 546.4C703.1 541.4 703.1 535.4 703.6 531.3C704.1 527.2 705.7 524.2 706.7 521.9C707.7 519.6 709.2 518.1 709.7 517.4"/><path d="M633 560.8C634.6 559 638.4 553.1 642.4 550.2C646.5 547.3 652.5 544.7 657.6 543.4C662.6 542.2 669.2 542.2 672.7 542.7C676.1 543.2 678 543.9 678.3 546.4C678.6 549 676.4 554.1 674.6 557.8C672.7 561.4 669.8 566.3 667 568.4C664.2 570.4 660.4 570.7 657.6 570.2C654.7 569.7 652.2 566.8 650 565.3C647.8 563.9 645.3 562.2 644.3 561.6"/><path d="M642.4 561.6C644 560.6 649.4 556.6 651.9 555.9C654.4 555.1 657.2 556.1 657.6 557C657.9 558 655.7 560.2 653.8 561.6C651.9 562.9 648 565.2 646.2 565.3C644.5 565.5 643.7 562.8 643.2 562.3"/><path d="M685.9 561.6C686.8 561.2 690.1 559 691.6 559.7C693 560.3 694.6 563.1 694.6 565.3C694.6 567.5 693 571 691.6 572.9C690.1 574.8 687.5 576.7 685.9 576.7C684.3 576.7 682.4 574.8 682.1 572.9C681.8 571 683.4 567.2 684 565.3C684.6 563.4 685.6 562.2 685.9 561.6"/><path d="M679.5 581.6 L687.8 580.4"/><path d="M684 574.8C683.7 577.6 681.8 589.9 682.1 591.8C682.4 593.7 685.6 588.6 685.9 586.1C686.2 583.6 684.3 578.2 684 576.7"/><path d="M629.2 615.2C631.4 615.6 637.7 616.8 642.4 617.5C647.2 618.1 653.1 619 657.6 619C662 619 665.1 618.3 668.9 617.5C672.7 616.6 678.3 614.3 680.2 613.7"/><path d="M598.4 647C597.8 649.8 596.1 657.5 595 664C593.9 670.5 592.3 678.7 592 686C591.7 693.3 592.3 701 593 708C593.7 715 595.2 722.7 596 728C596.8 733.3 596.7 737.3 598 740C599.3 742.7 601.3 743.3 604 744C606.7 744.7 611.2 744.7 614 744C616.8 743.3 619 742.3 621 740C623 737.7 624.8 734.3 626 730C627.2 725.7 627.4 719.7 628 714C628.6 708.3 629 701.7 629.6 696C630.2 690.3 630.7 685 631.6 680C632.5 675 634.2 669.7 635 666C635.8 662.3 636.2 659 636.4 657.6"/><path d="M662.4 657C663 659.2 664.7 664.8 666 670C667.3 675.2 669 682 670 688C671 694 670.7 700.3 672 706C673.3 711.7 676.2 717.3 678 722C679.8 726.7 681.7 730 683 734C684.3 738 684.3 742.3 686 746C687.7 749.7 690.3 753.3 693 756C695.7 758.7 699.2 760.8 702 762C704.8 763.2 707.8 763.2 710 763C712.2 762.8 714 763.2 715 761C716 758.8 716.2 754.8 716 750C715.8 745.2 714.5 737.3 714 732C713.5 726.7 713.8 722.7 713 718C712.2 713.3 710.5 708.7 709 704C707.5 699.3 705.3 694.3 704 690C702.7 685.7 701.6 682.6 701 678C700.4 673.4 700.7 665 700.6 662.4"/><circle cx="727.500" cy="383.200" r=".6" fill="#555" stroke="none"/></svg>
<!--SK-END-->
<div class="hd" style="left:17px;top:248px"></div>
<div class="hd" style="left:452.5px;top:248px"></div>
<div class="hd" style="left:888px;top:248px"></div>
<div class="hd" style="left:888px;top:521.5px"></div>
<div class="hd" style="left:17px;top:795.5px"></div>
<div class="hd" style="left:452.5px;top:795.5px"></div>
<div class="hd" style="left:888px;top:795.5px"></div>
<!--LEFT-SLIDER-->

<!-- COCREATOR PANEL -->
<!--PANEL-START-->
<div class="abs" style="left:911px;top:209px;width:514px;height:632px;border-radius:9px;background:rgba(47,47,53,.52);box-shadow:0 0 0 1px rgba(0,0,0,.2),0 2px 6px rgba(0,0,0,.26),0 8px 22px rgba(0,0,0,.28)"></div>
<div class="t" style="left:937px;top:236px;font-size:22px;line-height:26px;font-weight:700;color:#fff;letter-spacing:-.480px" id="cotitle">Cocreator</div>
<!-- bulb -->
<svg style="left:1269px;top:238px" width="20" height="22" viewBox="0 0 20 22" fill="none" stroke="#fff" stroke-width="1.400" stroke-linecap="round" stroke-linejoin="round"><path d="M10 1.600a6.400 6.400 0 0 0-4.600 10.850c.3.300.400.700.400 1.100V15.600h8.400v-2.050c0-.4.100-.8.400-1.100A6.400 6.400 0 0 0 10 1.600z"/><path d="M6.600 15.600v1.300a2.400 2.400 0 0 0 2.400 2.400h2a2.400 2.400 0 0 0 2.400-2.400v-1.300"/></svg>
<!-- info -->
<svg style="left:1323px;top:239px" width="18" height="18" viewBox="0 0 18 18" fill="none" stroke="#fff" stroke-width="1.3"><circle cx="9" cy="9" r="8"/><path d="M9 8v5" stroke-linecap="round" stroke-width="1.5"/><circle cx="9" cy="5.3" r=".95" fill="#fff" stroke="none"/></svg>
<!-- close -->
<svg style="left:1382px;top:243px" width="13" height="13" viewBox="0 0 13 13" fill="none" stroke="#fff" stroke-width="1.350" stroke-linecap="round"><path d="M.7.700l11.600 11.600M12.300.700L.700 12.300"/></svg>
<!-- prompt box -->
<div class="abs" style="left:938px;top:282px;width:460px;height:67.5px;border-radius:4px;background:#34353b;border-bottom:1.5px solid #9b9ca0;box-shadow:inset 0 0 0 1px rgba(255,255,255,.03)"></div>
<div class="t" style="left:950px;top:291.500px;font-size:17px;line-height:19px;letter-spacing:-.520px;color:#fff" id="prompt">two beagles playing in the garden</div>
<!-- image frame -->
<div class="abs" style="left:938px;top:363px;width:460px;height:302.5px;border-radius:5px;background:#303137;box-shadow:inset 0 0 0 1px rgba(255,255,255,.04)"></div>
<div class="abs" id="beagleimg" style="left:939px;top:371px;width:458px;height:286px;background:#f7f5f3;overflow:hidden">
<!--BG-START-->
<svg style="left:0;top:0" width="458" height="286" viewBox="939 371 458 286"><defs>
<filter id="bl1" x="-60%" y="-60%" width="220%" height="220%"><feGaussianBlur stdDeviation="1.6"/></filter>
<filter id="bl2" x="-30%" y="-80%" width="160%" height="260%"><feGaussianBlur stdDeviation="2.2"/></filter>
<filter id="bl0" x="-5%" y="-5%" width="110%" height="110%"><feGaussianBlur stdDeviation=".45"/></filter>
<linearGradient id="og1" x1="0" y1="0" x2="1" y2="1"><stop offset="0" stop-color="#f0922a"/><stop offset="1" stop-color="#e07412"/></linearGradient>
<linearGradient id="og2" x1="0" y1="0" x2=".3" y2="1"><stop offset="0" stop-color="#b85c16"/><stop offset=".6" stop-color="#d87418"/><stop offset="1" stop-color="#f08c1e"/></linearGradient>
<linearGradient id="og3" x1="0" y1="0" x2=".4" y2="1"><stop offset="0" stop-color="#b05818"/><stop offset="1" stop-color="#8f4412"/></linearGradient>
<linearGradient id="og4" x1="0" y1="0" x2=".2" y2="1"><stop offset="0" stop-color="#c56a1a"/><stop offset="1" stop-color="#a04e14"/></linearGradient>
<linearGradient id="og5" x1="0" y1="0" x2="1" y2="1"><stop offset="0" stop-color="#e07a18"/><stop offset="1" stop-color="#ec9230"/></linearGradient>
<radialGradient id="og6" cx=".55" cy=".45" r=".7"><stop offset="0" stop-color="#ec8e2a"/><stop offset=".6" stop-color="#dc7616"/><stop offset="1" stop-color="#a85212"/></radialGradient>
<linearGradient id="og7" x1="0" y1="0" x2="1" y2="1"><stop offset="0" stop-color="#e07a18"/><stop offset=".5" stop-color="#d86e14"/><stop offset="1" stop-color="#ea821c"/></linearGradient>
<radialGradient id="og8" cx=".6" cy=".4" r=".8"><stop offset="0" stop-color="#e8902c"/><stop offset="1" stop-color="#a85414"/></radialGradient>
<radialGradient id="vig" cx=".5" cy=".5" r=".78"><stop offset="0" stop-color="#fdfcfb"/><stop offset=".8" stop-color="#fbfaf8"/><stop offset="1" stop-color="#f2f0ee"/></radialGradient>
</defs><rect x="939" y="371" width="458" height="286" fill="url(#vig)"/><g filter="url(#bl0)"><ellipse cx="1031.9" cy="572.5" rx="14" ry="3" fill="#d9d6d4" filter="url(#bl2)"/><ellipse cx="1092.4" cy="578.7" rx="16" ry="3.5" fill="#d9d6d4" filter="url(#bl2)"/><ellipse cx="1151" cy="569.8" rx="14" ry="3" fill="#d9d6d4" filter="url(#bl2)"/><ellipse cx="1079.9" cy="564.5" rx="8" ry="2" fill="#d9d6d4" filter="url(#bl2)"/><ellipse cx="1220" cy="584.4" rx="16" ry="3.5" fill="#d9d6d4" filter="url(#bl2)"/><ellipse cx="1306.7" cy="572.2" rx="13" ry="3" fill="#d9d6d4" filter="url(#bl2)"/><ellipse cx="1257.8" cy="570" rx="14" ry="3" fill="#d9d6d4" filter="url(#bl2)"/><ellipse cx="1208.9" cy="566.7" rx="8" ry="2" fill="#d9d6d4" filter="url(#bl2)"/><path d="M1046.1 523.6C1048.6 521.2 1054.7 520.9 1056.8 521.8C1058.9 522.7 1059.2 525.9 1058.9 528.9C1058.7 531.9 1056.9 536.6 1055.4 539.6C1053.9 542.6 1051.9 546.1 1050 547C1048.1 548 1045.4 547.1 1044 545.3C1042.6 543.4 1041.5 539.6 1041.9 536C1042.2 532.4 1043.6 525.9 1046.1 523.6z" fill="#b5b1af"/><path d="M1073.9 532.5C1075.1 530.2 1080.7 532.8 1082.4 535.1C1084.1 537.5 1083.6 542 1083.8 546.7C1084 551.3 1084.7 560.2 1083.5 563C1082.3 565.9 1078.1 566.4 1076.7 563.9C1075.3 561.5 1075.4 553.7 1074.9 548.5C1074.5 543.2 1072.6 534.7 1073.9 532.5z" fill="#dedad8"/><path d="M1073.9 532.5C1075 531.1 1080.9 533.5 1082.4 535.1C1083.9 536.8 1083.9 540.9 1082.8 542.2C1081.6 543.6 1077.1 544.8 1075.6 543.1C1074.2 541.5 1072.7 533.8 1073.9 532.5z" fill="#8b8583"/><path d="M983.5 468.5C983.4 467.7 986.6 466.3 988.3 466.3C990 466.3 991.4 466.9 993.7 468.5C995.9 470 998.9 473.3 1001.7 475.6C1004.5 477.8 1007.3 480.1 1010.6 481.8C1013.8 483.5 1017.5 484.8 1021.2 485.9C1024.9 486.9 1031.6 486.3 1032.8 488C1034 489.7 1030.6 495.1 1028.3 496C1026.1 496.9 1022.7 494.7 1019.5 493.3C1016.2 492 1012 489.9 1008.8 488C1005.5 486.1 1002.4 484 999.9 481.8C997.4 479.6 995.4 476.5 993.7 474.7C991.9 472.8 990.9 471.6 989.2 470.6C987.5 469.5 983.7 469.2 983.5 468.5z" fill="url(#og1)"/><path d="M1028.3 493.3C1029.5 491.4 1030.7 490.5 1033.7 488.9C1036.6 487.3 1041.1 484.8 1046.1 483.6C1051.2 482.4 1058 481.8 1063.9 481.8C1069.8 481.8 1076.4 482.8 1081.7 483.6C1087 484.4 1091.8 486.4 1095.9 486.6C1100.1 486.7 1103 483.3 1106.6 484.5C1110.1 485.6 1112.5 489.5 1117.3 493.3C1122 497.2 1131 504 1135 507.6C1139 511.1 1140.1 511.7 1141.3 514.7C1142.4 517.6 1142.7 521.8 1142.1 525.4C1141.6 528.9 1138.1 532.8 1137.7 536C1137.3 539.3 1138.3 541.7 1139.5 544.9C1140.7 548.2 1143 552.8 1144.8 555.6C1146.6 558.4 1148.1 560.5 1150.1 561.8C1152.2 563.1 1155.7 562.7 1157.3 563.6C1158.8 564.4 1159.4 565.7 1159.2 567C1159.1 568.2 1158.6 570.3 1156.4 570.9C1154.1 571.4 1148.2 571.3 1145.7 570.3C1143.2 569.4 1143.2 568 1141.3 565.4C1139.3 562.8 1136.3 558 1134.1 554.7C1132 551.3 1130.1 547.4 1128.3 545.3C1126.5 543.1 1125.6 542 1123.5 541.7C1121.3 541.4 1118.7 542.7 1115.5 543.5C1112.2 544.3 1106.2 543.2 1103.9 546.7C1101.6 550.2 1101.9 559.7 1101.6 564.5C1101.3 569.2 1102.8 572.8 1102.1 575.1C1101.5 577.5 1100.5 578.3 1097.7 578.7C1094.9 579.1 1087.6 579 1085.2 577.8C1082.9 576.6 1083.8 575.3 1083.8 571.6C1083.8 567.9 1085.3 560.9 1085.2 555.6C1085.2 550.2 1084.4 543.4 1083.5 539.6C1082.6 535.7 1081.4 534.2 1079.9 532.5C1078.4 530.7 1078.1 530.7 1074.6 528.9C1071 527.1 1062.4 522.7 1058.6 521.8C1054.7 520.8 1053.5 522 1051.5 523.2C1049.4 524.4 1048.2 526.8 1046.1 528.9C1044.1 531 1041.1 533.6 1039 536C1036.9 538.4 1034.9 540.2 1033.7 543.1C1032.5 546.1 1031.6 550.2 1031.9 553.8C1032.2 557.4 1034.3 562.1 1035.5 564.5C1036.6 566.8 1038.6 566.8 1039 568C1039.5 569.3 1039.9 571.2 1038.1 571.9C1036.3 572.7 1030.6 573.1 1028.3 572.5C1026.1 571.8 1025.7 570.8 1024.8 568C1023.9 565.2 1023.5 559.4 1023 555.6C1022.5 551.7 1021.4 548.2 1021.6 544.9C1021.7 541.7 1023.1 539.3 1023.9 536C1024.7 532.8 1026.3 529.5 1026.6 525.4C1026.9 521.2 1025.7 515.3 1025.7 511.1C1025.7 507 1026.1 503.4 1026.6 500.5C1027 497.5 1027.2 495.3 1028.3 493.3z" fill="#fefefd" stroke="#dcd8d5" stroke-width=".9"/><path d="M1049.7 516.5C1051.1 514.4 1056.2 511.4 1060.4 511.1C1064.5 510.8 1069.8 512.6 1074.6 514.7C1079.3 516.8 1087.3 520.3 1088.8 523.6C1090.3 526.8 1085.8 533.4 1083.5 534.2C1081.1 535.1 1078.7 530.9 1074.6 528.9C1070.4 526.9 1062.4 523 1058.6 522.2C1054.8 521.3 1053.3 524.5 1051.8 523.6C1050.3 522.6 1048.3 518.5 1049.7 516.5z" fill="#e3dfdd" filter="url(#bl1)"/><path d="M1026.6 525.4C1027.6 520.9 1027.2 514.7 1028.3 514.7C1029.5 514.7 1033.1 521.2 1033.7 525.4C1034.3 529.5 1033.4 536 1031.9 539.6C1030.4 543.1 1026.4 546.4 1024.8 546.7C1023.2 547 1021.8 544.9 1022.1 541.4C1022.4 537.8 1025.5 529.8 1026.6 525.4z" fill="#ebe7e5" filter="url(#bl1)"/><path d="M1099.5 546.7C1100.5 543.7 1105.7 543.4 1106.6 544.9C1107.5 546.4 1105.4 552.3 1104.8 555.6C1104.2 558.8 1103.8 563.3 1103 564.5C1102.3 565.7 1101 565.7 1100.4 562.7C1099.8 559.7 1098.4 549.7 1099.5 546.7z" fill="#e9e2dc" filter="url(#bl1)"/><path d="M1024.8 553.8C1025.3 551.9 1027.2 553.8 1028.3 555.6C1029.5 557.4 1031.9 562 1031.9 564.5C1031.9 567 1029.4 570.2 1028.3 570.7C1027.3 571.1 1026.1 570 1025.5 567.1C1024.9 564.3 1024.3 555.7 1024.8 553.8z" fill="#eeebe9" filter="url(#bl1)"/><path d="M1129.7 544.9C1129.8 543.6 1133 544 1135 546.7C1137.1 549.4 1140.4 557.1 1142.1 560.9C1143.9 564.8 1145.9 569.1 1145.7 569.8C1145.6 570.5 1143.2 567.9 1141.3 565.4C1139.3 562.8 1136.1 558.1 1134.1 554.7C1132.2 551.3 1129.6 546.2 1129.7 544.9z" fill="#e6e2df" filter="url(#bl1)"/><path d="M1033.7 488.9C1035.6 486.4 1041.3 484.8 1046.1 483.6C1050.9 482.3 1061.2 480.2 1062.5 481.3C1063.8 482.3 1056.5 486.3 1054.1 489.8C1051.8 493.3 1049.5 498.7 1048.3 502.2C1047 505.8 1047.3 507.6 1046.5 511.1C1045.7 514.7 1044.6 519.7 1043.5 523.6C1042.3 527.5 1040.6 533.7 1039.4 534.6C1038.2 535.5 1036.7 531.6 1036.3 528.9C1036 526.2 1036.9 521.8 1037.2 518.2C1037.5 514.7 1038.5 510.8 1038.1 507.6C1037.7 504.3 1035.5 501.8 1034.7 498.7C1034 495.6 1031.8 491.4 1033.7 488.9z" fill="url(#og2)"/><path d="M1039 511.1C1040.5 509.7 1045.3 507.7 1046.1 509.7C1047 511.7 1045.1 519.1 1044 523.2C1042.9 527.4 1040.6 533.6 1039.4 534.6C1038.1 535.5 1036.9 531.6 1036.5 528.9C1036.2 526.2 1036.8 521.2 1037.2 518.2C1037.7 515.3 1037.5 512.5 1039 511.1z" fill="#f08c1e"/><path d="M1067.5 484.5C1070.1 483.6 1077.5 482.3 1081.7 482.7C1085.9 483 1091.5 484.2 1092.7 486.6C1094 489 1090.3 493.4 1089.2 496.9C1088 500.4 1086.8 504 1085.6 507.6C1084.4 511.2 1083.5 517.4 1082 518.6C1080.6 519.8 1078.5 516.8 1076.7 514.7C1074.9 512.5 1072.9 509.1 1071.4 505.8C1069.9 502.5 1068.8 498.1 1067.8 495.1C1066.9 492.2 1065.7 489.8 1065.7 488C1065.6 486.2 1064.8 485.3 1067.5 484.5z" fill="url(#og3)"/><path d="M1095.9 488.9C1097.4 486.7 1101.4 484 1103.4 483.6C1105.4 483.2 1107.1 484.1 1108 486.6C1108.9 489.1 1108.3 494.6 1108.7 498.7C1109.1 502.8 1109.9 507.3 1110.5 511.1C1111.1 515 1112 518.5 1112.3 521.8C1112.6 525.1 1113 528.6 1112.3 530.7C1111.5 532.8 1109.2 534.3 1107.7 534.6C1106.1 534.9 1103.9 534.3 1103 532.5C1102.1 530.6 1103 525.9 1102.1 523.6C1101.3 521.2 1099 520.9 1098 518.2C1097.1 515.6 1096.9 511.1 1096.3 507.6C1095.6 504 1094.4 500 1094.3 496.9C1094.3 493.8 1094.4 491.1 1095.9 488.9z" fill="url(#og4)"/><path d="M1103 528.9C1104.3 528 1109.5 526.8 1111 527.1C1112.6 527.4 1112.8 529.4 1112.3 530.7C1111.7 531.9 1109.1 534.2 1107.7 534.6C1106.2 535 1104.2 533.8 1103.4 532.8C1102.6 531.9 1101.8 529.9 1103 528.9z" fill="#5a2d10"/><path d="M1133.3 460.4C1134.9 458.8 1138.9 458.8 1142.1 458.8C1145.4 458.8 1149.6 459.1 1152.8 460.4C1156.1 461.8 1158.9 464.2 1161.7 466.7C1164.5 469.2 1168.5 472.9 1169.7 475.6C1171 478.2 1170.2 480.7 1169.2 482.7C1168.2 484.7 1164.5 485.3 1163.8 487.7C1163.2 490 1165.3 494.4 1165.3 496.9C1165.2 499.4 1165 501.3 1163.5 502.6C1162 503.8 1158.6 504.7 1156.4 504.4C1154.1 504 1152.8 501.7 1150.1 500.5C1147.5 499.2 1142.9 498.1 1140.4 496.9C1137.8 495.7 1136.5 495.7 1135 493.3C1133.6 491 1132 486.8 1131.5 482.7C1131 478.5 1131.9 472.2 1132.2 468.5C1132.5 464.7 1131.6 462 1133.3 460.4z" fill="#fbf8f5"/><path d="M1133.3 460.4C1134.9 458.6 1140 458.8 1142.1 458.8C1144.3 458.9 1145.2 458.2 1146.1 461C1146.9 463.8 1147.6 472.1 1147.1 475.6C1146.6 479 1144.6 479.9 1143 481.8C1141.5 483.6 1139 485 1137.7 486.6C1136.4 488.2 1135.8 492.2 1135 491.6C1134.2 490.9 1133.3 486.2 1132.9 482.7C1132.5 479.1 1132.5 473.9 1132.5 470.2C1132.6 466.5 1131.7 462.3 1133.3 460.4z" fill="url(#og5)"/><path d="M1151 461.7C1152.8 460.5 1158.6 464.4 1161.7 466.7C1164.8 469 1168.6 472.9 1169.9 475.6C1171.1 478.2 1170.2 480.7 1169.2 482.7C1168.2 484.6 1165.3 487.4 1163.8 487.3C1162.4 487.2 1161.8 483.9 1160.3 482.3C1158.8 480.8 1156.4 479.5 1154.9 478.1C1153.5 476.6 1152 476.5 1151.4 473.8C1150.7 471.1 1149.3 462.9 1151 461.7z" fill="url(#og5)"/><path d="M1135.9 493.3C1136.1 492.8 1138 493.2 1140.4 494.2C1142.7 495.3 1148.1 498.4 1150.1 499.6C1152.2 500.8 1153.1 500.9 1152.8 501.3C1152.5 501.8 1150.6 502.8 1148.4 502.2C1146.1 501.6 1141.6 499.3 1139.5 497.8C1137.4 496.3 1135.8 493.9 1135.9 493.3z" fill="#3a2a28"/><ellipse cx="1140.4" cy="476.5" rx="3.4" ry="2.8" fill="#2a1a10" transform="rotate(-35 1140.4 476.5)"/><ellipse cx="1156" cy="471.3" rx="2.4" ry="2.6" fill="#4a4038"/><path d="M1148.4 486.6C1149.3 485.3 1152.7 484.3 1154.6 484.5C1156.5 484.6 1159.2 486.2 1159.9 487.7C1160.7 489.1 1160.2 492.1 1159 493.3C1157.9 494.6 1154.5 495.3 1152.8 495.1C1151.1 495 1149.6 493.9 1148.9 492.5C1148.2 491 1147.4 487.9 1148.4 486.6z" fill="#1d2236"/><path d="M1152.8 495.5C1154 494.1 1158 493.1 1159.9 493.3C1161.9 493.6 1163.9 495.4 1164.6 496.9C1165.2 498.4 1165.1 501 1163.8 502.2C1162.6 503.5 1159.1 504.5 1157.3 504.4C1155.4 504.2 1153.6 502.8 1152.8 501.3C1152.1 499.9 1151.6 496.8 1152.8 495.5z" fill="#d4708e"/><path d="M1139.5 511.1C1140.1 508.5 1142.6 506.4 1143 507.6C1143.5 508.8 1142.7 515.6 1142.1 518.2C1141.6 520.9 1139.9 524.8 1139.5 523.6C1139 522.4 1138.9 513.8 1139.5 511.1z" fill="#e9993c"/><ellipse cx="1095" cy="536" rx="3" ry="1.8" fill="#f0a030"/><path d="M1107.5 478.2C1108.7 475.6 1112.4 471.1 1115.5 468.5C1118.6 465.8 1123.1 463.6 1126.1 462.2C1129.2 460.8 1132.1 459.1 1133.6 460.1C1135.2 461.1 1135.2 465 1135.4 468.5C1135.5 471.9 1134.8 476.7 1134.5 480.9C1134.2 485 1134.4 489.8 1133.6 493.3C1132.9 496.9 1131.5 499.9 1130.1 502.2C1128.6 504.6 1126.5 507.2 1124.7 507.6C1122.9 507.9 1120.9 506.1 1119.4 504.4C1117.8 502.6 1116.7 499.3 1115.5 496.9C1114.2 494.5 1113.1 491.9 1111.9 489.8C1110.7 487.7 1109.1 486.4 1108.4 484.5C1107.6 482.5 1106.3 480.9 1107.5 478.2z" fill="url(#og6)"/><ellipse cx="1029.2" cy="571.6" rx="1" ry="0.8" fill="#3b3432"/><ellipse cx="1032.8" cy="571.9" rx="1" ry="0.8" fill="#3b3432"/><ellipse cx="1036.3" cy="571.2" rx="1" ry="0.8" fill="#3b3432"/><ellipse cx="1087" cy="577.3" rx="1" ry="0.8" fill="#3b3432"/><ellipse cx="1091.5" cy="578" rx="1" ry="0.8" fill="#3b3432"/><ellipse cx="1096.8" cy="577.3" rx="1" ry="0.8" fill="#3b3432"/><ellipse cx="1146.6" cy="569.3" rx="1" ry="0.8" fill="#3b3432"/><ellipse cx="1151" cy="569.8" rx="1" ry="0.8" fill="#3b3432"/><ellipse cx="1154.9" cy="568.7" rx="1" ry="0.8" fill="#3b3432"/><path d="M1257.8 531.1C1260 528.7 1266.7 524.4 1271.1 523.3C1275.6 522.2 1280.7 522 1284.4 524.4C1288.2 526.9 1293.8 534.8 1293.8 537.8C1293.8 540.7 1287.4 541.1 1284.4 542.2C1281.5 543.3 1278.1 542.2 1276 544.4C1273.9 546.7 1273.4 551.9 1271.6 555.6C1269.7 559.3 1267.5 564.4 1264.9 566.7C1262.3 569 1258.5 570.4 1256 569.3C1253.5 568.3 1250.4 564.2 1250 560.4C1249.6 556.7 1252 550.4 1253.3 546.7C1254.6 542.9 1257 540.4 1257.8 537.8C1258.5 535.2 1255.6 533.5 1257.8 531.1z" fill="#f4f2f0" stroke="#d8d4d2" stroke-width=".7"/><path d="M1260 533.3C1262.2 530.2 1267.4 528.5 1271.1 527.8C1274.8 527 1279.3 527.4 1282.2 528.9C1285.2 530.4 1289.3 535 1288.9 536.7C1288.5 538.3 1283 538 1280 538.9C1277 539.8 1273.3 539.8 1271.1 542.2C1268.9 544.6 1268.3 550 1266.7 553.3C1265 556.7 1263 561.1 1261.1 562.2C1259.3 563.3 1256.1 562.6 1255.6 560C1255 557.4 1257 551.1 1257.8 546.7C1258.5 542.2 1257.8 536.5 1260 533.3z" fill="#d9d5d3" filter="url(#bl1)"/><path d="M1263.3 531.1C1265.6 527.7 1270 526.8 1273.3 526.2C1276.7 525.7 1280.6 526.2 1283.3 527.8C1286.1 529.3 1290.4 534.6 1290 535.6C1289.6 536.5 1284.1 533.5 1281.1 533.3C1278.1 533.1 1274.8 533.3 1272.2 534.4C1269.6 535.6 1267.6 538 1265.6 540C1263.5 542 1260.4 548.1 1260 546.7C1259.6 545.2 1261.1 534.5 1263.3 531.1z" fill="#fdfcfb"/><path d="M1226.7 524.4C1228.7 522 1235.3 524.4 1236.7 527.8C1238 531.1 1235.4 539.1 1234.7 544.4C1233.9 549.8 1232.5 554.8 1232 560C1231.5 565.2 1232.4 571.6 1231.6 575.6C1230.7 579.5 1229.3 582 1227.1 583.6C1224.9 585.1 1220.7 585.4 1218.2 584.9C1215.8 584.4 1212.9 583 1212.4 580.4C1212 577.9 1213.9 573.5 1215.6 569.3C1217.2 565.2 1220.7 560.1 1222.2 555.6C1223.7 551 1223.7 547.4 1224.4 542.2C1225.2 537 1224.6 526.9 1226.7 524.4z" fill="#fbfaf9" stroke="#e2dfdd" stroke-width=".7"/><path d="M1300.4 506.7C1301.6 504.7 1307.9 503 1311.1 500C1314.4 497 1317.4 492.6 1320 488.9C1322.6 485.2 1324.8 480.7 1326.7 477.8C1328.5 474.9 1329.6 472.3 1331.1 471.6C1332.6 470.8 1335 471.6 1335.6 473.3C1336.1 475.1 1335.7 478.9 1334.7 482.2C1333.6 485.6 1331.7 490 1329.3 493.3C1327 496.7 1323.4 499.8 1320.4 502.2C1317.5 504.7 1314.2 506.4 1311.6 508C1308.9 509.6 1306.3 511.8 1304.4 511.6C1302.6 511.3 1299.3 508.6 1300.4 506.7z" fill="url(#og1)"/><path d="M1213.3 460C1215.6 456.6 1222.1 457.1 1226.7 457.3C1231.2 457.5 1236 458.4 1240.4 461.1C1244.9 463.8 1247.5 468.7 1253.3 473.3C1259.2 478 1268.1 484.4 1275.6 488.9C1283 493.3 1293.3 496.3 1297.8 500C1302.2 503.7 1301.5 507 1302.2 511.1C1303 515.2 1301.9 519.3 1302.2 524.4C1302.6 529.6 1303.3 537 1304.4 542.2C1305.6 547.4 1307.6 551.1 1309.3 555.6C1311 560 1314 566.1 1314.7 568.9C1315.3 571.7 1315.4 572 1313.3 572.4C1311.3 572.9 1304.6 573.9 1302.2 571.8C1299.8 569.7 1299.9 564.2 1298.9 560C1297.9 555.8 1297.3 551.1 1296 546.7C1294.7 542.2 1293 537 1291.1 533.3C1289.2 529.6 1287.8 526.4 1284.4 524.4C1281.1 522.5 1275.2 520.7 1271.1 521.8C1267 522.9 1263.7 530.7 1260 531.1C1256.3 531.6 1251.5 526.3 1248.9 524.4C1246.3 522.6 1246.7 519.1 1244.4 520C1242.2 520.9 1238.5 528.8 1235.6 530C1232.6 531.2 1230 530.3 1226.7 527.1C1223.3 524 1218.2 516.4 1215.6 511.1C1212.9 505.9 1211.1 501.1 1210.7 495.6C1210.2 490 1212.4 483.7 1212.9 477.8C1213.3 471.9 1211 463.4 1213.3 460z" fill="#fefefd" stroke="#dcd8d5" stroke-width=".9"/><path d="M1226.7 497.8C1228 494.1 1232.8 493 1235.6 493.3C1238.3 493.7 1241.7 497 1243.3 500C1245 503 1246.1 507.4 1245.6 511.1C1245 514.8 1242 520 1240 522.2C1238 524.4 1235.4 525.6 1233.3 524.4C1231.3 523.3 1228.9 520 1227.8 515.6C1226.7 511.1 1225.4 501.5 1226.7 497.8z" fill="#f3f1ef" filter="url(#bl1)"/><path d="M1210.7 497.8C1211.7 497.8 1213.6 507.4 1216 511.1C1218.4 514.8 1223 516.3 1224.9 520C1226.7 523.7 1227.9 528.1 1227.1 533.3C1226.4 538.5 1222.3 545.9 1220.4 551.1C1218.6 556.4 1218.1 562.4 1216 564.9C1213.9 567.4 1210.1 567.1 1208 566C1205.9 564.9 1203.8 561.8 1203.6 558.2C1203.3 554.6 1205.6 549.3 1206.7 544.4C1207.7 539.6 1209.5 534.4 1210 528.9C1210.5 523.3 1209.7 516.3 1209.8 511.1C1209.9 505.9 1209.6 497.8 1210.7 497.8z" fill="#fefdfc" stroke="#dedad8" stroke-width=".7"/><path d="M1213.3 511.1C1214.1 509.6 1219.4 516.3 1221.1 520C1222.8 523.7 1223.7 528.9 1223.3 533.3C1223 537.8 1220.2 545.2 1218.9 546.7C1217.6 548.1 1215.9 545.2 1215.6 542.2C1215.2 539.3 1217 534.1 1216.7 528.9C1216.3 523.7 1212.6 512.6 1213.3 511.1z" fill="#eee9e4" filter="url(#bl1)"/><path d="M1238.2 460.4C1239.9 460.1 1245.3 466 1248.9 468.9C1252.5 471.8 1256.3 475 1260 477.8C1263.7 480.6 1267 483 1271.1 485.6C1275.2 488.1 1280.3 490.9 1284.4 493.3C1288.6 495.7 1293 497.4 1296 500C1299 502.6 1301.9 506.3 1302.2 508.9C1302.6 511.5 1299.7 515.2 1298.2 515.6C1296.7 515.9 1294.9 509.6 1293.3 511.1C1291.8 512.6 1291.1 522.8 1288.9 524.4C1286.7 526.1 1283 521.7 1280 521.1C1277 520.6 1273.7 520.5 1271.1 521.1C1268.5 521.7 1266.5 523.1 1264.4 524.9C1262.4 526.6 1260 532.4 1258.9 531.6C1257.8 530.7 1257.7 524.5 1257.8 520C1257.8 515.5 1259.5 508.9 1259.1 504.4C1258.7 500 1257.3 496.2 1255.6 493.3C1253.9 490.4 1250.9 487 1248.9 487.1C1246.9 487.2 1244.9 494.6 1243.6 493.8C1242.2 493 1241.6 486 1240.9 482.2C1240.1 478.4 1239.6 474.7 1239.1 471.1C1238.7 467.5 1236.6 460.8 1238.2 460.4z" fill="url(#og7)"/><path d="M1264.4 494.4C1266 492.4 1271.1 491.5 1273.3 492.2C1275.6 493 1277.6 496.3 1277.8 498.9C1278 501.5 1276.1 505.7 1274.4 507.8C1272.8 509.8 1269.5 511.7 1267.8 511.1C1266 510.6 1264.6 507.2 1264 504.4C1263.4 501.7 1262.9 496.5 1264.4 494.4z" fill="#a85616" filter="url(#bl1)"/><path d="M1290 500C1291.2 499.3 1294.6 500.8 1296 502.7C1297.4 504.5 1298.2 508.2 1298.2 511.1C1298.2 514 1297.2 517.8 1296 520C1294.8 522.2 1292.5 525.2 1291.1 524.4C1289.7 523.7 1288.1 518.5 1287.8 515.6C1287.4 512.6 1288.5 509.3 1288.9 506.7C1289.3 504.1 1288.8 500.7 1290 500z" fill="#fbf7f2"/><path d="M1295.1 511.1C1296.3 510.5 1299 516.3 1300 520C1301 523.7 1301.3 528.8 1301.3 533.3C1301.3 537.9 1301 545.2 1300 547.1C1299 549 1297 547.1 1295.6 544.9C1294.1 542.7 1293 536.7 1291.6 533.8C1290.1 530.8 1286.9 528.8 1287.1 527.1C1287.3 525.4 1291.6 526.2 1292.9 523.6C1294.2 520.9 1293.9 511.7 1295.1 511.1z" fill="#ea8820"/><path d="M1212.2 480C1213 478.1 1214.9 475.6 1215.6 477.8C1216.2 480 1216.4 490 1216 493.3C1215.6 496.7 1214.1 498.5 1213.3 497.8C1212.5 497 1211.3 491.9 1211.1 488.9C1210.9 485.9 1211.5 481.9 1212.2 480z" fill="#e07d1c"/><path d="M1173.3 444.4C1173.9 441.3 1175.6 436.7 1177.8 433.3C1180 430 1184.1 426.7 1186.7 424.4C1189.3 422.2 1191.6 420.4 1193.3 420C1195 419.6 1196.9 420.4 1196.9 422.2C1196.9 424.1 1194.3 427.8 1193.3 431.1C1192.4 434.4 1191.3 438.5 1191.1 442.2C1191 445.9 1192.8 449.8 1192.4 453.3C1192.1 456.9 1190.4 461.3 1188.9 463.3C1187.4 465.4 1185.2 466.3 1183.3 465.8C1181.5 465.2 1179.3 462.3 1177.8 460C1176.3 457.7 1175.2 454.8 1174.4 452.2C1173.7 449.6 1172.8 447.6 1173.3 444.4z" fill="url(#og8)"/><path d="M1193.3 420C1195.6 416.7 1200 416.5 1204.4 415.6C1208.9 414.6 1216.6 412.2 1220 414.4C1223.4 416.7 1223.9 423.9 1224.9 428.9C1225.9 433.9 1226.1 440.4 1225.8 444.4C1225.4 448.5 1224.7 450.7 1222.7 453.3C1220.7 456 1216.7 458.5 1213.8 460.4C1210.8 462.4 1207.7 463.8 1204.9 464.9C1202 466 1198.6 467.5 1196.7 467.1C1194.7 466.7 1193.7 465 1193.3 462.7C1193 460.4 1194.6 456.4 1194.4 453.3C1194.3 450.3 1192.8 447.4 1192.2 444.4C1191.7 441.5 1190.9 439.6 1191.1 435.6C1191.3 431.5 1191.1 423.3 1193.3 420z" fill="#fcfaf8"/><path d="M1191.1 422.2C1193.6 419.4 1202 415.6 1203.6 416.7C1205.1 417.8 1201.6 425 1200.4 428.9C1199.3 432.8 1198.4 437.6 1196.9 440C1195.4 442.4 1192.9 444.7 1191.6 443.6C1190.2 442.4 1189 436.9 1188.9 433.3C1188.8 429.8 1188.7 425 1191.1 422.2z" fill="url(#og5)"/><path d="M1210 418.9C1212.4 417 1217.5 413.9 1220 415.6C1222.5 417.2 1224.3 424.4 1224.9 428.9C1225.5 433.3 1224.9 439 1223.8 442.2C1222.7 445.4 1220.5 447.6 1218.2 448C1216 448.4 1212.3 446.6 1210.2 444.9C1208.1 443.2 1206.5 440.8 1205.8 437.8C1205 434.7 1205.1 429.8 1205.8 426.7C1206.5 423.5 1207.6 420.7 1210 418.9z" fill="url(#og5)"/><ellipse cx="1193.3" cy="440.4" rx="3.2" ry="3.4" fill="#24140a"/><ellipse cx="1211.1" cy="436" rx="4.2" ry="4" fill="#24140a"/><ellipse cx="1211.8" cy="435.1" rx="1" ry="1" fill="#d8c8b8"/><path d="M1195.6 453.3C1196.2 451.9 1198.8 450.7 1200.4 450.7C1202.1 450.6 1204.6 451.8 1205.6 452.9C1206.5 454 1206.8 456.1 1206.2 457.3C1205.7 458.5 1203.8 459.7 1202.2 460C1200.6 460.3 1197.8 460.2 1196.7 459.1C1195.6 458 1194.9 454.7 1195.6 453.3z" fill="#1a1c2c"/><path d="M1193.3 461.8C1194.3 460.9 1198.3 463.3 1201.1 462.7C1203.9 462.1 1207.8 459.4 1210 458.2C1212.2 457 1214.1 455.1 1214.4 455.6C1214.8 456 1213.9 459.3 1212.2 461.1C1210.6 462.9 1207.2 465.1 1204.4 466.2C1201.7 467.3 1197.4 468.5 1195.6 467.8C1193.7 467 1192.4 462.6 1193.3 461.8z" fill="#3a2624"/><path d="M1195.1 463.6C1196 463.1 1200.2 464.2 1202.2 464C1204.2 463.8 1206.7 461.9 1207.1 462.2C1207.5 462.5 1206.2 465 1204.4 465.8C1202.7 466.5 1198.2 467 1196.7 466.7C1195.1 466.3 1194.2 464 1195.1 463.6z" fill="#e48aa0"/><path d="M1220 414.4C1221.3 412.8 1227.3 411.1 1231.1 411.1C1234.9 411.1 1239.1 412.8 1242.7 414.4C1246.2 416.1 1249.9 418.3 1252.4 421.1C1255 423.9 1257.4 427.6 1258 431.1C1258.6 434.6 1257.3 438.5 1255.8 442.2C1254.3 445.9 1251.7 450.3 1249.1 453.3C1246.5 456.4 1243.2 459.3 1240.2 460.4C1237.3 461.6 1233.6 461.6 1231.3 460C1229.1 458.4 1227.8 454.4 1226.9 451.1C1226 447.8 1226.2 443.7 1225.8 440C1225.4 436.3 1224.9 432 1224.4 428.9C1224 425.7 1223.9 423.5 1223.1 421.1C1222.4 418.7 1218.7 416.1 1220 414.4z" fill="url(#og6)"/><path d="M1220.4 415.6C1220.7 413.7 1223.5 418.1 1224.4 422.2C1225.4 426.3 1225.7 435.1 1226.2 440C1226.7 444.9 1226.7 448.3 1227.6 451.6C1228.4 454.8 1231.5 458.4 1231.6 459.6C1231.6 460.7 1229.2 460 1228 458.2C1226.8 456.4 1225.3 453 1224.4 448.9C1223.6 444.7 1223.8 438.9 1223.1 433.3C1222.4 427.8 1220.2 417.4 1220.4 415.6z" fill="#8a4210" opacity=".7"/><ellipse cx="1215.6" cy="581.8" rx="1" ry="0.9" fill="#2e2826"/><ellipse cx="1220.4" cy="584.4" rx="1" ry="0.9" fill="#2e2826"/><ellipse cx="1226.2" cy="583.1" rx="1" ry="0.9" fill="#2e2826"/><ellipse cx="1302.2" cy="571.1" rx="1" ry="0.9" fill="#2e2826"/><ellipse cx="1307.6" cy="572.2" rx="1" ry="0.9" fill="#2e2826"/><ellipse cx="1312.9" cy="570.7" rx="1" ry="0.9" fill="#2e2826"/><ellipse cx="1207.1" cy="564.9" rx="1" ry="0.9" fill="#2e2826"/><ellipse cx="1211.6" cy="565.8" rx="1" ry="0.9" fill="#2e2826"/><ellipse cx="1254.4" cy="567.8" rx="1" ry="0.9" fill="#2e2826"/><ellipse cx="1258.9" cy="568.9" rx="1" ry="0.9" fill="#2e2826"/></g></svg>
<!--BG-END-->
</div>
<!-- creativity -->
<div class="t" style="left:937px;top:687px;font-size:15.5px;line-height:17px;font-weight:700;color:#fff">創造力</div>
<div class="abs" style="left:938px;top:722.5px;width:460px;height:4px;border-radius:2px;background:#9d9d9f"></div>
<div class="abs" style="left:938px;top:722.5px;width:326px;height:4px;border-radius:2px;background:#4cc2ff"></div>
<div class="abs" style="left:1254.5px;top:714.5px;width:20px;height:20px;border-radius:50%;background:#454549;box-shadow:0 0 0 .5px rgba(0,0,0,.35)"></div>
<div class="abs" style="left:1258.5px;top:718.5px;width:12px;height:12px;border-radius:50%;background:#4cc2ff"></div>
<!-- buttons -->
<div class="abs" style="left:937.5px;top:756px;width:205px;height:43px;border-radius:5px;background:rgba(255,255,255,.058);box-shadow:inset 0 0 0 1px rgba(255,255,255,.03)"></div>
<div class="abs" style="left:948px;top:765px;width:36px;height:24.500px;border-radius:3px;background:#3c3b44;box-shadow:inset 0 0 0 1.400px #4f4e58"></div>
<svg style="left:957px;top:768px" width="18" height="19" viewBox="0 0 18 18"><path d="M.1 9.300C.1 6.800 1 5 2.200 3.800 3.800 1.600 6 .2 8.600 .2c2.200 0 4.100.7 5.500 1.900 1.800 1.400 2.900 3.300 2.900 5.600 0 1.800-.2 3.500-.7 5-.6 1.700-1.500 3.100-2.700 3.900-1.100.8-2.500 1.100-3.900 1.100-1.300 0-2.300-.7-2.800-1.700-.5-1.100 0-2.100.3-3.300.2-.7-.7-.9-1.400-.3l-2.800 2.500c-.8.500-1.700.1-2.200-1.100C.3 12.500.1 10.900.1 9.300z" fill="#7c8ca4"/><circle cx="2.900" cy="9.200" r="1.250" fill="#965260"/><circle cx="5.100" cy="5.200" r="1.250" fill="#4d6e58"/><circle cx="8.800" cy="3.800" r="1.350" fill="#b09878"/><circle cx="8.700" cy="9.750" r="1" fill="#34343e"/><path d="M11.800 6h2.900l-.6 2.900h-1.700z" fill="#b0a090"/><path d="M12.400 8.800h1.700l.1 9h-1.900z" fill="#94705a"/></svg>
<div class="t" style="left:997.5px;top:768px;font-size:16.200px;line-height:19px;color:#fff">沒有選取項目</div>
<svg style="left:1115px;top:773px" width="12" height="8" viewBox="-0.5 -0.5 12 8" fill="none" stroke="#d8d8da" stroke-width="1.300" stroke-linecap="round" stroke-linejoin="round"><path d="M1 1.200l5 5 5-5"/></svg>
<div class="abs" style="left:1156.500px;top:756px;width:125px;height:43px;border-radius:5px;background:rgba(255,255,255,.058);box-shadow:inset 0 0 0 1px rgba(255,255,255,.03)"></div>
<svg style="left:1173px;top:767px" width="21" height="21" viewBox="0 0 21 21" fill="none" stroke="#fff" stroke-width="1.500" stroke-linecap="round" stroke-linejoin="round"><path d="M2.600 10.200A7.900 7.900 0 0 1 16.800 5.600"/><path d="M17.600 1.700v4.500h-4.500"/><path d="M18.400 10.800A7.900 7.900 0 0 1 4.200 15.400"/><path d="M3.400 19.300v-4.500h4.500"/></svg>
<div class="t" style="left:1201.500px;top:768px;font-size:16.200px;line-height:19px;color:#fff">再試一次</div>
<div class="abs" style="left:1295px;top:756px;width:103px;height:43px;border-radius:5px;background:#4cc2ff"></div>
<svg style="left:1318px;top:769px" width="15" height="15" viewBox="-0.5 0 15 15" fill="none" stroke="#0a1a24" stroke-width="1.400" stroke-linecap="round"><path d="M7.500.8v13.400M.8 7.500h13.400"/></svg>
<div class="t" style="left:1344.500px;top:768px;font-size:16.200px;line-height:19px;color:#06131c">套用</div>
<!--PANEL-END-->

<!-- SCROLLBAR + STATUS BAR -->
<!--STATUS-START-->
<!-- left size slider -->
<div class="abs" style="left:14.500px;top:323.500px;width:43.500px;height:404px;border-radius:8px;background:#2c2c2d;box-shadow:0 3px 10px rgba(0,0,0,.35),0 0 0 1px rgba(0,0,0,.25)"></div>
<svg style="left:27px;top:340px" width="18" height="15" viewBox="0 0 18 15" fill="none" stroke="#e9e9e9" stroke-linecap="round"><path d="M1 2.200c3-1.600 5 .8 8 .8s5-1.400 8-.2" stroke-width=".9"/><path d="M1 5.400c3-1.600 5 .8 8 .8s5-1.400 8-.2" stroke-width="1.300"/><path d="M1 8.900c3-1.600 5 .8 8 .8s5-1.400 8-.2" stroke-width="1.800"/><path d="M1 12.700c3-1.600 5 .8 8 .8s5-1.400 8-.2" stroke-width="2.300"/></svg>
<div class="abs" style="left:34px;top:370px;width:4px;height:324px;border-radius:2px;background:#9e9e9f"></div>
<div class="abs" style="left:26px;top:693.500px;width:20px;height:20px;border-radius:50%;background:#454547"></div>
<div class="abs" style="left:30px;top:697.500px;width:12px;height:12px;border-radius:50%;background:#4cc2ff"></div>

<!-- horizontal scrollbar -->
<div class="abs" style="left:0;top:843px;width:894px;height:14px;border-radius:0 7px 7px 0;background:rgba(255,255,255,.075)"></div>
<div class="abs" style="left:16.500px;top:846px;width:845.500px;height:8px;border-radius:4px;background:#9d9d9e"></div>
<svg style="left:5px;top:845px" width="8" height="10" viewBox="0 0 8 10"><path d="M7.500 .6v8.800L.8 5z" fill="#a3a3a4"/></svg>
<svg style="left:882px;top:845px" width="8" height="10" viewBox="0 0 8 10"><path d="M.5 .6v8.800L7.200 5z" fill="#a3a3a4"/></svg>

<!-- status bar -->
<div class="abs" style="left:0;top:857px;width:1440px;height:1px;background:rgba(0,0,0,.22)"></div>
<svg style="left:14px;top:871px" width="12" height="16" viewBox="0 -0.5 12 16" fill="none" stroke="#fff" stroke-width="1.300" stroke-linejoin="round"><path d="M1.800 1.500v11.800l3.400-3.300h5.100z"/></svg>
<div class="t" style="left:36px;top:871px;font-size:13.300px;line-height:17px;color:#fff">937, 170像素</div>
<div class="vsep" style="left:151px;top:866px;height:25px"></div>
<svg style="left:162px;top:872px" width="14" height="14" viewBox="0 0 14 14" fill="none" stroke="#fff" stroke-width="1.300" stroke-dasharray="3 2.330" stroke-dashoffset="1.500"><rect x=".8" y=".8" width="12.400" height="12.400" rx="2.500"/></svg>
<div class="vsep" style="left:300px;top:866px;height:25px"></div>
<svg style="left:309px;top:872px" width="15" height="15" viewBox="-0.5 0 15 15" fill="none" stroke="#fff" stroke-width="1.300" stroke-linecap="round"><rect x="2.500" y="2.500" width="10" height="10"/><path d="M1 2.500h1.500M2.500 1v1.500M12.500 1v1.500M12.500 2.500H14M1 12.500h1.500M2.500 12.500V14M12.500 12.500V14M12.500 12.500H14"/></svg>
<div class="t" style="left:333px;top:871px;font-size:13.500px;line-height:17px;color:#fff">1152 × 720像素</div>

<svg style="left:1058px;top:871px" width="17" height="16" viewBox="-0.5 0 17 16" fill="none" stroke="#fff" stroke-width="1.300" stroke-linecap="round" stroke-linejoin="round"><path d="M1 5V3a2 2 0 0 1 2-2h1.500M12.500 1H14a2 2 0 0 1 2 2v2M16 11v2a2 2 0 0 1-2 2h-1.500M4.500 15H3a2 2 0 0 1-2-2v-2"/><circle cx="8.500" cy="8" r="3.200"/></svg>
<div class="abs" style="left:1095px;top:863px;width:102px;height:32px;border-radius:4px;background:rgba(255,255,255,.06);box-shadow:inset 0 0 0 1px rgba(255,255,255,.03)"></div>
<div class="t" style="left:1108px;top:871px;font-size:13.500px;line-height:17px;color:#fff">100%</div>
<svg style="left:1169px;top:875px" width="11" height="7" viewBox="-0.5 -0.5 11 7" fill="none" stroke="#e4e4e4" stroke-width="1.200" stroke-linecap="round" stroke-linejoin="round"><path d="M1 1l4.500 4.500L10 1"/></svg>
<svg style="left:1216px;top:870px" width="17" height="17" viewBox="0 0 17 17" fill="none" stroke="#fff" stroke-width="1.300" stroke-linecap="round"><circle cx="7" cy="7" r="5.500"/><path d="M11.200 11.200L16 16"/><path d="M4.500 7h5" stroke="#4cc2ff"/></svg>
<div class="abs" style="left:1248px;top:877.500px;width:146px;height:4px;border-radius:2px;background:#9d9d9f"></div>
<div class="abs" style="left:1248px;top:877.500px;width:24px;height:4px;border-radius:2px;background:#4cc2ff"></div>
<div class="abs" style="left:1262px;top:869.500px;width:20px;height:20px;border-radius:50%;background:#454549"></div>
<div class="abs" style="left:1266px;top:873.500px;width:12px;height:12px;border-radius:50%;background:#4cc2ff"></div>
<svg style="left:1408px;top:870px" width="17" height="17" viewBox="0 0 17 17" fill="none" stroke="#fff" stroke-width="1.300" stroke-linecap="round"><circle cx="7" cy="7" r="5.500"/><path d="M11.200 11.200L16 16" /><path d="M4.500 7h5M7 4.500v5" stroke="#4cc2ff"/></svg>
<!--STATUS-END-->

<div class="abs" id="winborder" style="left:0;top:0;width:1440px;height:900px;box-shadow:inset 0 1px 0 rgba(255,255,255,.09),inset 1px 0 0 rgba(255,255,255,.05),inset -1px 0 0 rgba(255,255,255,.05),inset 0 -1px 0 rgba(255,255,255,.05);pointer-events:none"></div>
</div>
</body>
</html>
